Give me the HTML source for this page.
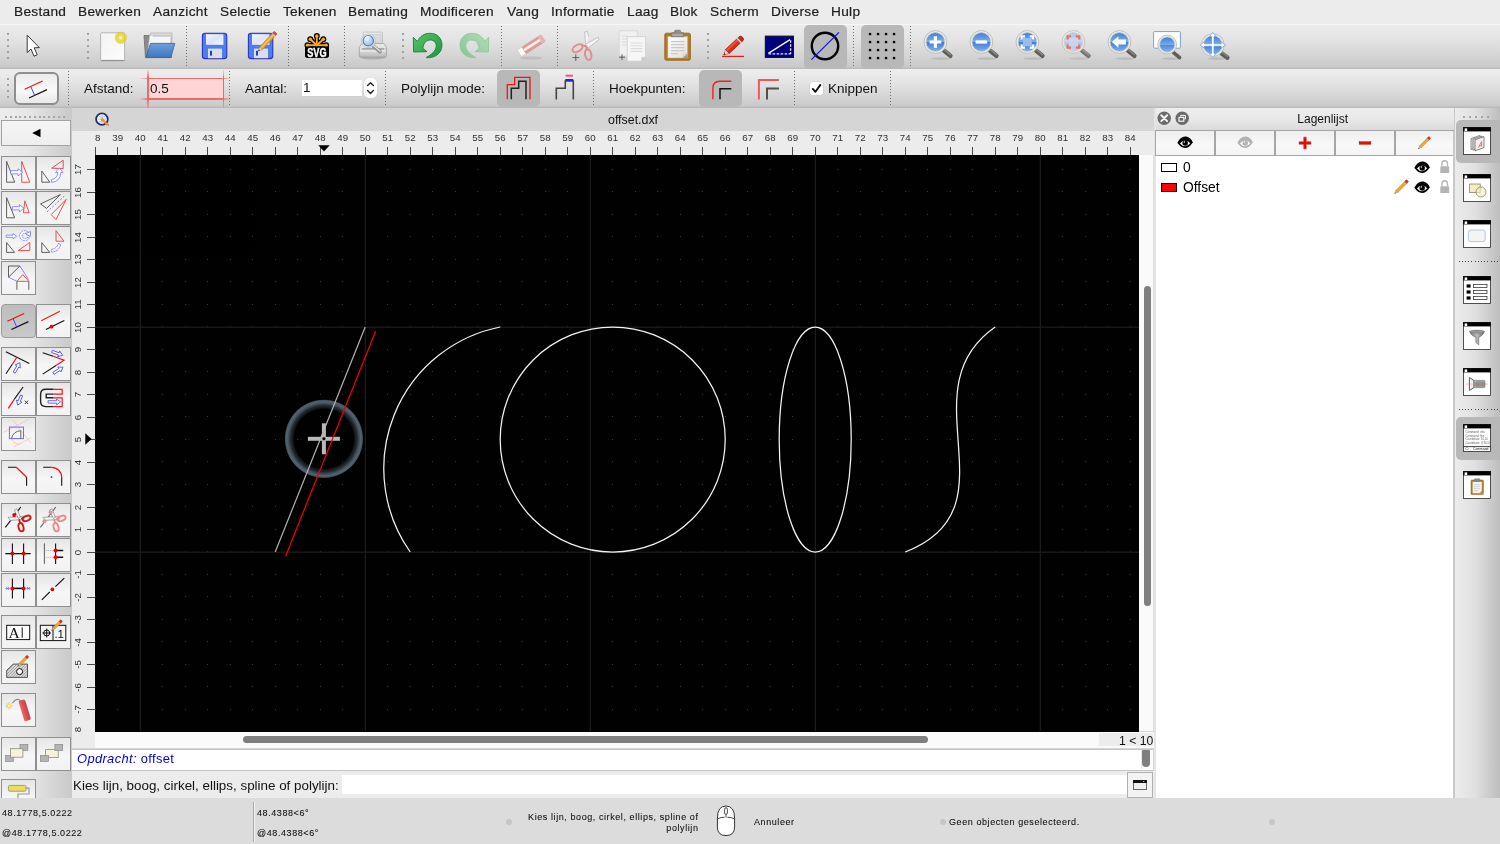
<!DOCTYPE html><html lang="nl"><head><meta charset="utf-8"><title>offset.dxf - QCAD</title><style>
*{box-sizing:border-box;margin:0;padding:0}
html,body{width:1500px;height:844px;overflow:hidden;background:#ececec}
body{font-family:"Liberation Sans",sans-serif;color:#111;position:relative}
#app{position:absolute;left:0;top:0;width:1500px;height:844px;overflow:hidden;background:#d6d6d6;opacity:.999;will-change:transform}
.abs{position:absolute}
.t{position:absolute;white-space:nowrap;line-height:1}
#menubar{left:0;top:0;width:1500px;height:24px;background:#ececec}
#menubar .t{font-size:13.7px;top:4.5px;color:#1c1c1c;letter-spacing:.28px;-webkit-text-stroke:.2px #1c1c1c}
#tb1{left:0;top:24px;width:1500px;height:45px;background:linear-gradient(#ececec 0%,#e3e3e3 35%,#d2d2d2 75%,#c9c9c9 95%,#b6b6b6 100%);border-top:1px solid #f6f6f6}
#tb2{left:0;top:69px;width:1500px;height:39px;background:linear-gradient(#eeeeee 0%,#e4e4e4 35%,#d3d3d3 75%,#cacaca 94%,#b4b4b4 100%)}
#tb2 .t{font-size:13.5px;top:13px;color:#111}
.vsep{position:absolute;width:1px;background:repeating-linear-gradient(#707070 0,#707070 1px,transparent 1px,transparent 3px)}
.hdl{position:absolute;width:2px}
.hl{position:absolute;background:#b8b8b8;border-radius:5px}
#left{left:0;top:108px;width:72px;height:690px;background:linear-gradient(90deg,#ededed 0%,#e6e6e6 40%,#c9c9c9 100%)}
.lb{position:absolute;width:34.5px;height:34px;background:linear-gradient(#e6e6e6,#f6f6f6 55%,#f2f2f2);border:1px solid #8f8f8f}
.lb.on{background:linear-gradient(#bdbdbd,#c9c9c9);border-radius:4px;border-color:#9c9c9c}
.lb svg{position:absolute;left:0;top:0}
#tabbar{left:72px;top:108px;width:1082px;height:23px;background:#d5d5d5}
#rulerT{left:72px;top:131px;width:1082px;height:24px;background:#ececec;overflow:hidden}
#rulerL{left:72px;top:155px;width:23px;height:593px;background:#ececec;overflow:hidden}
#canvas{left:95px;top:155px;width:1044px;height:576.7px;background:#000;overflow:hidden}
#vsb{left:1139px;top:155px;width:15px;height:576px;background:#fafafa;border-right:1px solid #dcdcdc}
#hsb{left:95px;top:731.7px;width:1059px;height:16.3px;background:#fafafa}
.thumb{position:absolute;background:#7f7f7f;border-radius:4px}
#hist{left:72px;top:748.6px;width:1081px;height:22.3px;background:#fff;border-top:1px solid #c4c4c4;border-bottom:1px solid #c4c4c4}
#cmd{left:72px;top:771px;width:1082px;height:27px;background:#ececec}
#status{left:0;top:798.3px;width:1500px;height:46px;background:#dcdcdc}
#status .t{font-size:9px;color:#111;letter-spacing:.58px;-webkit-text-stroke:.08px #111}
.dot{position:absolute;width:6px;height:6px;border-radius:3px;background:#c6c6c6}
#rp{left:1154px;top:108px;width:300px;height:690px;background:#ececec}
#rtb{left:1454px;top:108px;width:46px;height:690px;background:linear-gradient(90deg,#ececec 0%,#e0e0e0 45%,#bdbdbd 100%);border-left:1px solid #c8c8c8}
.lbtn{position:absolute;top:131px;height:24px;background:linear-gradient(#f7f7f7,#ededed);border:1px solid #a8a8a8;border-bottom-color:#989898}
</style></head><body><div id="app">
<div id="menubar" class="abs">
<span class="t" style="left:14px">Bestand</span>
<span class="t" style="left:78px">Bewerken</span>
<span class="t" style="left:153px">Aanzicht</span>
<span class="t" style="left:220px">Selectie</span>
<span class="t" style="left:283px">Tekenen</span>
<span class="t" style="left:348px">Bemating</span>
<span class="t" style="left:420px">Modificeren</span>
<span class="t" style="left:507px">Vang</span>
<span class="t" style="left:551px">Informatie</span>
<span class="t" style="left:627px">Laag</span>
<span class="t" style="left:670px">Blok</span>
<span class="t" style="left:710px">Scherm</span>
<span class="t" style="left:771px">Diverse</span>
<span class="t" style="left:831px">Hulp</span>
</div>
<div id="tb1" class="abs">
<i class="abs" style="left:7px;top:8px;width:2px;height:2px;background:#a2a2a2"></i><i class="abs" style="left:7px;top:14px;width:2px;height:2px;background:#a2a2a2"></i><i class="abs" style="left:7px;top:20px;width:2px;height:2px;background:#a2a2a2"></i><i class="abs" style="left:7px;top:26px;width:2px;height:2px;background:#a2a2a2"></i><i class="abs" style="left:7px;top:32px;width:2px;height:2px;background:#a2a2a2"></i>
<i class="abs" style="left:87px;top:8px;width:2px;height:2px;background:#a2a2a2"></i><i class="abs" style="left:87px;top:14px;width:2px;height:2px;background:#a2a2a2"></i><i class="abs" style="left:87px;top:20px;width:2px;height:2px;background:#a2a2a2"></i><i class="abs" style="left:87px;top:26px;width:2px;height:2px;background:#a2a2a2"></i><i class="abs" style="left:87px;top:32px;width:2px;height:2px;background:#a2a2a2"></i>
<i class="abs" style="left:402px;top:8px;width:2px;height:2px;background:#a2a2a2"></i><i class="abs" style="left:402px;top:14px;width:2px;height:2px;background:#a2a2a2"></i><i class="abs" style="left:402px;top:20px;width:2px;height:2px;background:#a2a2a2"></i><i class="abs" style="left:402px;top:26px;width:2px;height:2px;background:#a2a2a2"></i><i class="abs" style="left:402px;top:32px;width:2px;height:2px;background:#a2a2a2"></i>
<i class="abs" style="left:707px;top:8px;width:2px;height:2px;background:#a2a2a2"></i><i class="abs" style="left:707px;top:14px;width:2px;height:2px;background:#a2a2a2"></i><i class="abs" style="left:707px;top:20px;width:2px;height:2px;background:#a2a2a2"></i><i class="abs" style="left:707px;top:26px;width:2px;height:2px;background:#a2a2a2"></i><i class="abs" style="left:707px;top:32px;width:2px;height:2px;background:#a2a2a2"></i>
<i class="vsep" style="left:186px;top:1px;height:41px"></i>
<i class="vsep" style="left:288px;top:1px;height:41px"></i>
<i class="vsep" style="left:344px;top:1px;height:41px"></i>
<i class="vsep" style="left:501px;top:1px;height:41px"></i>
<i class="vsep" style="left:557px;top:1px;height:41px"></i>
<i class="vsep" style="left:853px;top:1px;height:41px"></i>
<i class="vsep" style="left:910px;top:1px;height:41px"></i>
<div class="hl" style="left:804px;top:0px;width:43px;height:44px"></div>
<div class="hl" style="left:861px;top:0px;width:43px;height:44px"></div>
<svg class="abs" style="left:13px;top:2px" width="36" height="36" viewBox="0 0 36 36"><path d="M14.2 8.2 L14.2 25.6 L18 22 L21 29.2 L24.2 27.8 L21.2 20.8 L26.4 20.6 Z" fill="#fff" stroke="#3a3a3a" stroke-width="1" stroke-linejoin="round"/></svg>
<svg class="abs" style="left:95px;top:2px" width="36" height="36" viewBox="0 0 36 36"><defs><linearGradient id="g1" x1="0" y1="0" x2="1" y2="1"><stop offset="0" stop-color="#f4f4f4"/><stop offset="1" stop-color="#fdfdfd"/></linearGradient><radialGradient id="g2"><stop offset="0" stop-color="#fffff4"/><stop offset=".16" stop-color="#fdf8a8"/><stop offset=".36" stop-color="#eedd34"/><stop offset=".62" stop-color="#e4d02c" stop-opacity=".85"/><stop offset=".88" stop-color="#dcc828" stop-opacity=".55"/><stop offset="1" stop-color="#d8c428" stop-opacity="0"/></radialGradient></defs><rect x="5.6" y="5.8" width="24" height="27.6" rx="1" fill="url(#g1)" stroke="#b5b5b5" stroke-width="1"/><path d="M6 33.6 H29.4" stroke="#8e8e8e" stroke-width="1.1"/><circle cx="25.8" cy="10.8" r="6.6" fill="url(#g2)"/></svg>
<svg class="abs" style="left:141px;top:2px" width="36" height="36" viewBox="0 0 36 36"><defs><linearGradient id="g3" x1="0" y1="0" x2="0" y2="1"><stop offset="0" stop-color="#6fa0dc"/><stop offset="1" stop-color="#3f74be"/></linearGradient></defs><path d="M3 8.5 L13 8.5 L14.5 10.5 L30.5 10.5 L30.5 30.5 L4.5 30.5 Z" fill="#8b8b8b" stroke="#6c6c6c" stroke-width=".8"/><path d="M9.5 6 L31 6 L30.5 22 L8 22 Z" fill="#e4e4e4" stroke="#a8a8a8" stroke-width=".7"/><path d="M8.6 8.2 L30 8.2 L29.5 24 L7 24 Z" fill="#f6f6f6" stroke="#b4b4b4" stroke-width=".7"/><path d="M12 9 H29" stroke="#c4c4c4" stroke-width="1.4"/><path d="M9.6 16.4 L33.8 16.4 L29.8 30.6 L4.8 30.6 Z" fill="url(#g3)" stroke="#3a66a8" stroke-width=".9" stroke-linejoin="round"/></svg>
<svg class="abs" style="left:196px;top:2px" width="36" height="36" viewBox="0 0 36 36"><defs><linearGradient id="g4" x1="0" y1="0" x2="1" y2="1"><stop offset="0" stop-color="#f4f6fc"/><stop offset=".5" stop-color="#dfe4f4"/><stop offset="1" stop-color="#f8f9fd"/></linearGradient></defs><rect x="6.4" y="6.2" width="24.4" height="25.4" rx="2.6" fill="#4d7ef2" stroke="#2b35b4" stroke-width="1.1"/><rect x="10" y="7.2" width="17.4" height="10.6" fill="url(#g4)"/><rect x="12" y="21.6" width="14" height="9.6" fill="#dcdde6"/><rect x="14" y="23.8" width="2" height="4.8" fill="#1c3fd0"/></svg>
<svg class="abs" style="left:243px;top:2px" width="36" height="36" viewBox="0 0 36 36"><defs><linearGradient id="g5" x1="0" y1="0" x2="1" y2="1"><stop offset="0" stop-color="#f4f6fc"/><stop offset=".5" stop-color="#dfe4f4"/><stop offset="1" stop-color="#f8f9fd"/></linearGradient></defs><rect x="5.4" y="6.2" width="24.4" height="25.4" rx="2.6" fill="#4d7ef2" stroke="#2b35b4" stroke-width="1.1"/><rect x="9" y="7.2" width="17.4" height="10.6" fill="url(#g5)"/><rect x="11" y="21.6" width="14" height="9.6" fill="#dcdde6"/><rect x="13" y="23.8" width="2" height="4.8" fill="#1c3fd0"/><g transform="translate(32.6 5.6) rotate(43)"><rect x="-2" y="0" width="4" height="2.6" fill="#e0443a" stroke="#b03028" stroke-width=".4"/><rect x="-2" y="2.6" width="4" height="1.4" fill="#d8d0c0"/><rect x="-2" y="4" width="4" height="17" fill="#f0a028" stroke="#b87414" stroke-width=".5"/><rect x="-.6" y="4" width="1.2" height="17" fill="#f8c860"/><path d="M-2 21 L0 25.4 L2 21 Z" fill="#ecd0a8" stroke="#9a6a34" stroke-width=".4"/><path d="M-.7 23.8 L0 25.4 L.7 23.8 Z" fill="#222"/></g></svg>
<svg class="abs" style="left:299px;top:2px" width="36" height="36" viewBox="0 0 36 36"><rect x="6" y="16.4" width="23.9" height="14.4" rx="2.8" fill="#000"/><g stroke="#000" stroke-linecap="round"><line x1="17.8" y1="18.3" x2="8.5" y2="18.3" stroke-width="4.4"/><circle cx="8.5" cy="18.3" r="3" fill="#000" stroke="none"/><line x1="17.8" y1="18.3" x2="11.3" y2="12.2" stroke-width="4.4"/><circle cx="11.3" cy="12.2" r="3" fill="#000" stroke="none"/><line x1="17.8" y1="18.3" x2="17.8" y2="9.0" stroke-width="4.4"/><circle cx="17.8" cy="9.0" r="3" fill="#000" stroke="none"/><line x1="17.8" y1="18.3" x2="24.3" y2="12.2" stroke-width="4.4"/><circle cx="24.3" cy="12.2" r="3" fill="#000" stroke="none"/><line x1="17.8" y1="18.3" x2="27.1" y2="18.3" stroke-width="4.4"/><circle cx="27.1" cy="18.3" r="3" fill="#000" stroke="none"/></g><g stroke="#f9a825" stroke-linecap="round"><line x1="17.8" y1="18.3" x2="8.5" y2="18.3" stroke-width="1.9"/><circle cx="8.5" cy="18.3" r="1.75" fill="#f9a825" stroke="none"/><line x1="17.8" y1="18.3" x2="11.3" y2="12.2" stroke-width="1.9"/><circle cx="11.3" cy="12.2" r="1.75" fill="#f9a825" stroke="none"/><line x1="17.8" y1="18.3" x2="17.8" y2="9.0" stroke-width="1.9"/><circle cx="17.8" cy="9.0" r="1.75" fill="#f9a825" stroke="none"/><line x1="17.8" y1="18.3" x2="24.3" y2="12.2" stroke-width="1.9"/><circle cx="24.3" cy="12.2" r="1.75" fill="#f9a825" stroke="none"/><line x1="17.8" y1="18.3" x2="27.1" y2="18.3" stroke-width="1.9"/><circle cx="27.1" cy="18.3" r="1.75" fill="#f9a825" stroke="none"/></g><rect x="6" y="19.6" width="23.9" height="11.2" rx="2.4" fill="#000"/><text x="17.9" y="29.6" text-anchor="middle" font-family="Liberation Sans,sans-serif" font-weight="bold" font-size="12.7" textLength="19.4" lengthAdjust="spacingAndGlyphs" fill="#fff" stroke="#fff" stroke-width=".35">SVG</text></svg>
<svg class="abs" style="left:355px;top:2px" width="36" height="36" viewBox="0 0 36 36"><defs><linearGradient id="g6" x1="0" y1="0" x2="0" y2="1"><stop offset="0" stop-color="#ededed"/><stop offset=".45" stop-color="#dcdcdc"/><stop offset="1" stop-color="#b9b9b9"/></linearGradient><radialGradient id="g7" cx=".4" cy=".35"><stop offset="0" stop-color="#eaf2fb"/><stop offset="1" stop-color="#a9c6e8"/></radialGradient><linearGradient id="g8" x1="0" y1="0" x2="1" y2="1"><stop offset="0" stop-color="#f4f4f4"/><stop offset="1" stop-color="#d6d6d6"/></linearGradient></defs><ellipse cx="18" cy="30.6" rx="12.6" ry="2" fill="#000" opacity=".16"/><rect x="8.3" y="5.1" width="19.1" height="13.6" rx=".8" fill="url(#g8)" stroke="#b4b4b4" stroke-width=".7"/><rect x="17.6" y="7.4" width="7.8" height="8" fill="#dadada" stroke="#c4c4c4" stroke-width=".5"/><path d="M6.6 16.6 H29.2 L31.4 20.4 V28.6 Q31.4 30.2 29.8 30.2 H5.9 Q4.3 30.2 4.3 28.6 V20.4 Z" fill="url(#g6)" stroke="#9c9c9c" stroke-width=".8"/><path d="M7 21.9 H29.4" stroke="#8a8a8a" stroke-width="1.1"/><path d="M5 24 H30.8" stroke="#f4f4f4" stroke-width=".9"/><path d="M18.2 18.8 L25 24.6" stroke="#8c8c8c" stroke-width="3.6" stroke-linecap="round"/><path d="M18.4 18.4 L25.2 24.2" stroke="#e0e0e0" stroke-width="1.5" stroke-linecap="round"/><circle cx="13.3" cy="13.7" r="6.9" fill="#e8e8e4" stroke="#b6b6b0" stroke-width=".6"/><circle cx="13.3" cy="13.7" r="5.2" fill="url(#g7)" stroke="#4a84d0" stroke-width="1.1"/><path d="M10 12.4 A3.8 3.8 0 0 1 14.6 9.8" stroke="#fff" stroke-width="1.1" fill="none" opacity=".8"/></svg>
<svg class="abs" style="left:410px;top:2px" width="36" height="36" viewBox="0 0 36 36"><defs><linearGradient id="g9" x1="0" y1="0" x2="1" y2="1"><stop offset="0" stop-color="#5cc46a"/><stop offset="1" stop-color="#1f9440"/></linearGradient></defs><path d="M3.3 10.3 L3.6 25 L16.9 24.7 L12.9 21.3 C13.5 15.8 16.6 13 20.2 13 C24.2 13 26.6 16 26.2 19.6 C25.8 24 21.8 27.6 16 30.6 C23.4 31.6 32 27.2 32 18.3 C32 11 27 6.3 20 6.3 C14 6.3 9.6 9.6 7.4 14.4 Z" fill="url(#g9)" stroke="#178234" stroke-width=".9" stroke-linejoin="round"/></svg>
<svg class="abs" style="left:456px;top:2px" width="36" height="36" viewBox="0 0 36 36"><g transform="translate(36 0) scale(-1 1)"><defs><linearGradient id="g10" x1="0" y1="0" x2="1" y2="1"><stop offset="0" stop-color="#b4dcb8"/><stop offset="1" stop-color="#86c494"/></linearGradient></defs><path d="M3.3 10.3 L3.6 25 L16.9 24.7 L12.9 21.3 C13.5 15.8 16.6 13 20.2 13 C24.2 13 26.6 16 26.2 19.6 C25.8 24 21.8 27.6 16 30.6 C23.4 31.6 32 27.2 32 18.3 C32 11 27 6.3 20 6.3 C14 6.3 9.6 9.6 7.4 14.4 Z" fill="url(#g10)" stroke="#8cc89a" stroke-width=".9" stroke-linejoin="round"/></g></svg>
<svg class="abs" style="left:512px;top:2px" width="36" height="36" viewBox="0 0 36 36"><ellipse cx="19" cy="31" rx="11" ry="1.6" fill="#000" opacity=".09"/><g transform="translate(9.4 29.6) rotate(-32.5)"><rect x="0" y="-7.8" width="5.6" height="7.8" rx=".6" fill="#fbfbfb" stroke="#c4c4c4" stroke-width=".5"/><rect x="5.6" y="-7.8" width="22.6" height="7.8" rx="1" fill="#e29a98" stroke="#cf8a88" stroke-width=".5"/><rect x="5.6" y="-5.4" width="19.6" height="2.6" fill="#f8f0f0"/><path d="M25.2 -7.8 V0" stroke="#d8c0c0" stroke-width="1.6"/><rect x="26" y="-7.8" width="2.2" height="7.8" rx="1" fill="#e8b4b2"/></g></svg>
<svg class="abs" style="left:567px;top:2px" width="36" height="36" viewBox="0 0 36 36"><g fill="none" stroke-linecap="round"><path d="M21.6 9.4 L20.2 4.2 L17.6 5 L19 21.6" fill="#f4f4f4" stroke="#b9b9b9" stroke-width=".8" stroke-linejoin="round"/><path d="M21 21 L32 12.6 L31 10.2 L19.4 16.8" fill="#f4f4f4" stroke="#b9b9b9" stroke-width=".8" stroke-linejoin="round"/><ellipse cx="10.6" cy="21.2" rx="5.6" ry="3.2" transform="rotate(-33 10.6 21.2)" stroke="#de8e92" stroke-width="2"/><ellipse cx="21.2" cy="27.6" rx="3.1" ry="5.4" transform="rotate(-12 21.2 27.6)" stroke="#de8e92" stroke-width="2"/><path d="M15.4 18.6 L19.4 19.4 L20.4 22.6" stroke="#de8e92" stroke-width="2"/><path d="M5.8 30.6 H11.8 M8.8 27.6 V33.6" stroke="#444" stroke-width=".8"/></g></svg>
<svg class="abs" style="left:613px;top:2px" width="36" height="36" viewBox="0 0 36 36"><g><path d="M6.2 3.8 H24.4 V29 H6.2 Z" fill="#f1f1f1" stroke="#d4d4d4" stroke-width=".8"/><path d="M9 9 H15 M9 12 H15 M9 15 H15 M9 18 H15" stroke="#d8d8d8" stroke-width="1"/><path d="M14.2 9.6 H32.6 V30.4 L28.8 34.2 H14.2 Z" fill="#f6f6f6" stroke="#cdcdcd" stroke-width=".8"/><path d="M32.6 30.4 L28.8 30.4 L28.8 34.2 Z" fill="#d0d0d0" stroke="#c0c0c0" stroke-width=".5"/><path d="M17.6 16 H29.4 M17.6 18.8 H29.4 M17.6 21.6 H29.4 M17.6 24.4 H29.4" stroke="#dadada" stroke-width="1.1"/><path d="M6 30.2 H12 M9 27.2 V33.2" stroke="#444" stroke-width=".8"/></g></svg>
<svg class="abs" style="left:659px;top:2px" width="36" height="36" viewBox="0 0 36 36"><defs><linearGradient id="g11" x1="0" y1="0" x2="1" y2="1"><stop offset="0" stop-color="#ffffff"/><stop offset="1" stop-color="#dedede"/></linearGradient></defs><rect x="5.8" y="6.2" width="25.6" height="27" rx="1.6" fill="#b97a22" stroke="#8a5a14" stroke-width=".8"/><path d="M8.8 9.4 H28.6 V31 H8.8 Z" fill="url(#g11)" stroke="#a8a8a8" stroke-width=".5"/><path d="M28.6 26.2 L23.6 31 L28.6 31 Z" fill="#9a9a9a"/><path d="M23.6 31 L24.2 26.8 L28.6 26.2 Z" fill="#d4d4d4"/><path d="M12 14.6 H25.4 M12 17.6 H25.4 M12 20.6 H25.4 M12 23.6 H25.4 M12 26.6 H19" stroke="#c9c9c9" stroke-width="1.1"/><path d="M12.4 9.8 V6.6 Q12.4 5.6 13.4 5.6 H15.6 V4.2 Q15.6 3.2 16.6 3.2 H20.6 Q21.6 3.2 21.6 4.2 V5.6 H23.8 Q24.8 5.6 24.8 6.6 V9.8 Z" fill="#8f8f84" stroke="#6e6e64" stroke-width=".6"/><rect x="13.4" y="7.2" width="10.4" height="1.6" fill="#b4b4a8"/></svg>
<svg class="abs" style="left:715px;top:2px" width="36" height="36" viewBox="0 0 36 36"><path d="M7 29.4 H29" stroke="#f01818" stroke-width="1.2"/><g transform="translate(8.6 28) rotate(47)"><path d="M0 0 L-2.7 -5.2 L2.7 -5.2 Z" fill="#f0d4ac" stroke="#8a5a34" stroke-width=".5"/><path d="M0 0 L-.9 -1.8 L.9 -1.8 Z" fill="#1a1a1a"/><rect x="-2.7" y="-20.4" width="5.4" height="15.2" fill="#dc2a18" stroke="#8e1408" stroke-width=".6"/><rect x="-2" y="-20.4" width="1.6" height="15.2" fill="#f0583c"/><rect x="-2.7" y="-22.4" width="5.4" height="2" fill="#d4d4d4" stroke="#909090" stroke-width=".4"/><path d="M-2.7 -22.4 V-24.2 Q-2.7 -26 0 -26 Q2.7 -26 2.7 -24.2 V-22.4 Z" fill="#d82414" stroke="#8e1408" stroke-width=".6"/></g></svg>
<svg class="abs" style="left:761px;top:2px" width="36" height="36" viewBox="0 0 36 36"><rect x="4.4" y="9.2" width="28" height="21.2" fill="#00007e" stroke="#10103c" stroke-width="1.2"/><path d="M7.4 26.4 L29 12.6" stroke="#fff" stroke-width="1.3"/><path d="M7.6 26.9 H29.6" stroke="#e8e8f4" stroke-width="1.3" stroke-dasharray="2.6 1.4"/><path d="M29.6 13.2 V26.9" stroke="#e8e8f4" stroke-width="1.3" stroke-dasharray="2.6 1.4"/></svg>
<svg class="abs" style="left:807px;top:2px" width="36" height="36" viewBox="0 0 36 36"><circle cx="18" cy="19" r="13.2" fill="none" stroke="#000" stroke-width="2.4"/><path d="M4.4 32.6 L32 5.4" stroke="#1414f0" stroke-width="1.3"/></svg>
<svg class="abs" style="left:864px;top:2px" width="36" height="36" viewBox="0 0 36 36"><rect x="4.9" y="5.9" width="2.3" height="2.3" fill="#000"/><rect x="4.9" y="13.9" width="2.3" height="2.3" fill="#000"/><rect x="4.9" y="21.9" width="2.3" height="2.3" fill="#000"/><rect x="4.9" y="29.9" width="2.3" height="2.3" fill="#000"/><rect x="12.9" y="5.9" width="2.3" height="2.3" fill="#000"/><rect x="12.9" y="13.9" width="2.3" height="2.3" fill="#000"/><rect x="12.9" y="21.9" width="2.3" height="2.3" fill="#000"/><rect x="12.9" y="29.9" width="2.3" height="2.3" fill="#000"/><rect x="20.9" y="5.9" width="2.3" height="2.3" fill="#000"/><rect x="20.9" y="13.9" width="2.3" height="2.3" fill="#000"/><rect x="20.9" y="21.9" width="2.3" height="2.3" fill="#000"/><rect x="20.9" y="29.9" width="2.3" height="2.3" fill="#000"/><rect x="28.9" y="5.9" width="2.3" height="2.3" fill="#000"/><rect x="28.9" y="13.9" width="2.3" height="2.3" fill="#000"/><rect x="28.9" y="21.9" width="2.3" height="2.3" fill="#000"/><rect x="28.9" y="29.9" width="2.3" height="2.3" fill="#000"/></svg>
<svg class="abs" style="left:919px;top:2px" width="36" height="36" viewBox="0 0 36 36"><g opacity="1"><defs><linearGradient id="g12" x1="0" y1="0" x2="0" y2="1"><stop offset="0" stop-color="#3f7fd4"/><stop offset=".5" stop-color="#7fb0ea"/><stop offset=".52" stop-color="#3f7fd4"/><stop offset="1" stop-color="#7fb0ea"/></linearGradient></defs><ellipse cx="22" cy="31.6" rx="10" ry="1.3" fill="#000" opacity=".10"/><path d="M25.2 23.8 L31.4 28.8" stroke="#5e5e5a" stroke-width="4.4" stroke-linecap="round"/><path d="M25.8 23 L31.8 27.8" stroke="#8e8e88" stroke-width="1.2" stroke-linecap="round"/><circle cx="16.4" cy="15" r="11.4" fill="#eeeee6" stroke="#b4b4a8" stroke-width=".8"/><circle cx="16.4" cy="15" r="9.4" fill="url(#g12)" stroke="#c6ccd6" stroke-width=".8"/><path d="M10.6 15 H22.2 M16.4 9.2 V20.8" stroke="#fff" stroke-width="3.2"/></g></svg>
<svg class="abs" style="left:965px;top:2px" width="36" height="36" viewBox="0 0 36 36"><g opacity="1"><defs><linearGradient id="g13" x1="0" y1="0" x2="0" y2="1"><stop offset="0" stop-color="#3f7fd4"/><stop offset=".5" stop-color="#7fb0ea"/><stop offset=".52" stop-color="#3f7fd4"/><stop offset="1" stop-color="#7fb0ea"/></linearGradient></defs><ellipse cx="22" cy="31.6" rx="10" ry="1.3" fill="#000" opacity=".10"/><path d="M25.2 23.8 L31.4 28.8" stroke="#5e5e5a" stroke-width="4.4" stroke-linecap="round"/><path d="M25.8 23 L31.8 27.8" stroke="#8e8e88" stroke-width="1.2" stroke-linecap="round"/><circle cx="16.4" cy="15" r="11.4" fill="#eeeee6" stroke="#b4b4a8" stroke-width=".8"/><circle cx="16.4" cy="15" r="9.4" fill="url(#g13)" stroke="#c6ccd6" stroke-width=".8"/><path d="M10.6 15 H22.2" stroke="#fff" stroke-width="3.2"/></g></svg>
<svg class="abs" style="left:1011px;top:2px" width="36" height="36" viewBox="0 0 36 36"><g opacity="1"><defs><linearGradient id="g14" x1="0" y1="0" x2="0" y2="1"><stop offset="0" stop-color="#3f7fd4"/><stop offset=".5" stop-color="#7fb0ea"/><stop offset=".52" stop-color="#3f7fd4"/><stop offset="1" stop-color="#7fb0ea"/></linearGradient></defs><ellipse cx="22" cy="31.6" rx="10" ry="1.3" fill="#000" opacity=".10"/><path d="M25.2 23.8 L31.4 28.8" stroke="#5e5e5a" stroke-width="4.4" stroke-linecap="round"/><path d="M25.8 23 L31.8 27.8" stroke="#8e8e88" stroke-width="1.2" stroke-linecap="round"/><circle cx="16.4" cy="15" r="11.4" fill="#eeeee6" stroke="#b4b4a8" stroke-width=".8"/><circle cx="16.4" cy="15" r="9.4" fill="url(#g14)" stroke="#c6ccd6" stroke-width=".8"/><rect x="12" y="11" width="8.8" height="8" fill="#9cbcec"/><path d="M10.6 12.6 V9.4 H14 M18.8 9.4 H22.2 V12.6 M22.2 17.4 V20.6 H18.8 M14 20.6 H10.6 V17.4" fill="none" stroke="#fff" stroke-width="2.2"/></g></svg>
<svg class="abs" style="left:1057px;top:2px" width="36" height="36" viewBox="0 0 36 36"><g opacity="0.8"><defs><linearGradient id="g15" x1="0" y1="0" x2="0" y2="1"><stop offset="0" stop-color="#a4c0e8"/><stop offset=".5" stop-color="#c4d6f0"/><stop offset=".52" stop-color="#a4c0e8"/><stop offset="1" stop-color="#c4d6f0"/></linearGradient></defs><ellipse cx="22" cy="31.6" rx="10" ry="1.3" fill="#000" opacity=".10"/><path d="M25.2 23.8 L31.4 28.8" stroke="#5e5e5a" stroke-width="4.4" stroke-linecap="round"/><path d="M25.8 23 L31.8 27.8" stroke="#8e8e88" stroke-width="1.2" stroke-linecap="round"/><circle cx="16.4" cy="15" r="11.4" fill="#eeeee6" stroke="#b4b4a8" stroke-width=".8"/><circle cx="16.4" cy="15" r="9.4" fill="url(#g15)" stroke="#c6ccd6" stroke-width=".8"/><rect x="12" y="11" width="8.8" height="8" fill="#c4d4ec"/><path d="M10.6 12.6 V9.4 H14 M18.8 9.4 H22.2 V12.6 M22.2 17.4 V20.6 H18.8 M14 20.6 H10.6 V17.4" fill="none" stroke="#f05050" stroke-width="2.2"/></g></svg>
<svg class="abs" style="left:1103px;top:2px" width="36" height="36" viewBox="0 0 36 36"><g opacity="1"><defs><linearGradient id="g16" x1="0" y1="0" x2="0" y2="1"><stop offset="0" stop-color="#3f7fd4"/><stop offset=".5" stop-color="#7fb0ea"/><stop offset=".52" stop-color="#3f7fd4"/><stop offset="1" stop-color="#7fb0ea"/></linearGradient></defs><ellipse cx="22" cy="31.6" rx="10" ry="1.3" fill="#000" opacity=".10"/><path d="M25.2 23.8 L31.4 28.8" stroke="#5e5e5a" stroke-width="4.4" stroke-linecap="round"/><path d="M25.8 23 L31.8 27.8" stroke="#8e8e88" stroke-width="1.2" stroke-linecap="round"/><circle cx="16.4" cy="15" r="11.4" fill="#eeeee6" stroke="#b4b4a8" stroke-width=".8"/><circle cx="16.4" cy="15" r="9.4" fill="url(#g16)" stroke="#c6ccd6" stroke-width=".8"/><path d="M8.8 15 L15.4 9.2 V12.6 H23 V17.4 H15.4 V20.8 Z" fill="#fff"/></g></svg>
<svg class="abs" style="left:1149px;top:2px" width="36" height="36" viewBox="0 0 36 36"><defs><linearGradient id="g17" x1="0" y1="0" x2="0" y2="1"><stop offset="0" stop-color="#3f7fd4"/><stop offset=".5" stop-color="#78aae8"/><stop offset=".52" stop-color="#4c88d8"/><stop offset="1" stop-color="#8ab6ee"/></linearGradient></defs><rect x="4.6" y="4.6" width="26.8" height="16.6" rx="1" fill="#fff" stroke="#7a9edc" stroke-width="1"/><ellipse cx="22" cy="31.6" rx="9" ry="1.3" fill="#000" opacity=".10"/><path d="M24.6 25.6 L30.6 30.6" stroke="#5e5e5a" stroke-width="3.6" stroke-linecap="round"/><circle cx="18.2" cy="17.6" r="9.4" fill="#eeeee6" stroke="#b4b4a8" stroke-width=".8"/><circle cx="18.2" cy="17.6" r="7.6" fill="url(#g17)" stroke="#c6ccd6" stroke-width=".7"/></svg>
<svg class="abs" style="left:1195px;top:2px" width="36" height="36" viewBox="0 0 36 36"><g opacity="1"><defs><linearGradient id="g18" x1="0" y1="0" x2="0" y2="1"><stop offset="0" stop-color="#3f7fd4"/><stop offset=".5" stop-color="#7fb0ea"/><stop offset=".52" stop-color="#3f7fd4"/><stop offset="1" stop-color="#7fb0ea"/></linearGradient></defs><ellipse cx="22" cy="31.6" rx="10" ry="1.3" fill="#000" opacity=".10"/><path d="M26.6 26.4 L32.4 30.6" stroke="#5e5e5a" stroke-width="4.4" stroke-linecap="round"/><path d="M27.2 25.6 L32.8 29.6" stroke="#8e8e88" stroke-width="1.2" stroke-linecap="round"/><circle cx="17.8" cy="18" r="11.4" fill="#eeeee6" stroke="#b4b4a8" stroke-width=".8"/><circle cx="17.8" cy="18" r="9.4" fill="url(#g18)" stroke="#c6ccd6" stroke-width=".8"/><g transform="translate(1.4 3)"><path d="M16.4 2.4 L19.6 6.6 H17.6 V13.8 H24.8 V11.8 L29 15 L24.8 18.2 V16.2 H17.6 V23.4 H19.6 L16.4 27.6 L13.2 23.4 H15.2 V16.2 H8 V18.2 L3.8 15 L8 11.8 V13.8 H15.2 V6.6 H13.2 Z" fill="#fff" stroke="#5a8cd8" stroke-width=".6"/></g></g></svg>
</div>
<div id="tb2" class="abs">
<i class="abs" style="left:7px;top:9px;width:2px;height:2px;background:#a2a2a2"></i><i class="abs" style="left:7px;top:15px;width:2px;height:2px;background:#a2a2a2"></i><i class="abs" style="left:7px;top:21px;width:2px;height:2px;background:#a2a2a2"></i><i class="abs" style="left:7px;top:27px;width:2px;height:2px;background:#a2a2a2"></i>
<div class="abs" style="left:14px;top:3px;width:45px;height:33px;border:2px solid #8e8e8e;border-radius:6px;background:linear-gradient(#ececec,#fafafa 55%,#e9e9e9)"></div>
<svg class="abs" style="left:19px;top:3px" width="34" height="34" viewBox="0 0 34 34"><path d="M5.6 17.2 L23.6 9.0" stroke="#f01010" stroke-width="1.2"/><path d="M10.0 26.0 L28.0 17.6" stroke="#111" stroke-width="1.2"/><path d="M11.8 14.6 L15.6 23.4" stroke="#4444f4" stroke-width="1"/></svg>
<i class="vsep" style="left:68px;top:2px;height:34px"></i>
<i class="vsep" style="left:229px;top:2px;height:34px"></i>
<i class="vsep" style="left:385px;top:2px;height:34px"></i>
<i class="vsep" style="left:593px;top:2px;height:34px"></i>
<i class="vsep" style="left:794px;top:2px;height:34px"></i>
<i class="vsep" style="left:890px;top:2px;height:34px"></i>
<span class="t" style="left:84px">Afstand:</span>
<div class="abs" style="left:147px;top:9px;width:77px;height:21px;background:#ffd4d4"></div>
<div class="abs" style="left:139px;top:8.5px;width:93px;height:1.5px;background:linear-gradient(90deg,rgba(240,90,90,0),#ee6a6a 12%,#ee6a6a 88%,rgba(240,90,90,0))"></div>
<div class="abs" style="left:139px;top:29px;width:93px;height:1.5px;background:linear-gradient(90deg,rgba(240,90,90,0),#ee6a6a 12%,#ee6a6a 88%,rgba(240,90,90,0))"></div>
<div class="abs" style="left:147px;top:0px;width:1.5px;height:39px;background:linear-gradient(rgba(240,90,90,0),#ee6a6a 22%,#ee6a6a 78%,rgba(240,90,90,.3))"></div>
<div class="abs" style="left:222.5px;top:0px;width:1.5px;height:39px;background:linear-gradient(rgba(240,90,90,0),#ee6a6a 22%,#ee6a6a 78%,rgba(240,90,90,.3))"></div>
<span class="t" style="left:150px;font-size:13.5px">0.5</span>
<span class="t" style="left:245px">Aantal:</span>
<div class="abs" style="left:302px;top:11px;width:60px;height:17px;background:#fff;border-bottom:1px solid #d0d0d0"></div>
<span class="t" style="left:303px;top:12px;font-size:13.5px">1</span>
<div class="abs" style="left:364px;top:9px;width:13px;height:20px;background:#fff;border-radius:5px;box-shadow:0 0 1px #bbb"></div>
<svg class="abs" style="left:364px;top:8px" width="13" height="22"><path d="M3.6 8.6 L6.5 5.8 L9.4 8.6 M3.6 13.6 L6.5 16.4 L9.4 13.6" fill="none" stroke="#222" stroke-width="1.4" stroke-linecap="round" stroke-linejoin="round"/></svg>
<span class="t" style="left:401px">Polylijn mode:</span>
<div class="hl" style="left:497px;top:1px;width:43px;height:37px"></div>
<svg class="abs" style="left:502px;top:3px" width="34" height="34" viewBox="0 0 34 34"><path d="M5.3 27.3 V12.7 H12.7 V5.3 H28 V27.3" fill="none" stroke="#f01414" stroke-width="1.3"/><path d="M9.3 27.3 V16.3 H16.7 V9.3 H24 V27.3" fill="none" stroke="#222" stroke-width="1.5"/></svg>
<svg class="abs" style="left:548px;top:3px" width="34" height="34" viewBox="0 0 34 34"><path d="M8.3 27.6 V16.3 H17.3 V9 H25.3 V27.6" fill="none" stroke="#444" stroke-width="1.6"/><path d="M17.3 8 H25.3" stroke="#2222ee" stroke-width="2"/><path d="M17.6 3.7 H25" stroke="#f25c5c" stroke-width="2"/></svg>
<span class="t" style="left:609px">Hoekpunten:</span>
<div class="hl" style="left:699px;top:1px;width:43px;height:37px"></div>
<svg class="abs" style="left:704px;top:3px" width="34" height="34" viewBox="0 0 34 34"><path d="M8.9 27.3 V16.3 Q8.9 9.3 15.9 9.3 H27.3" fill="none" stroke="#f02020" stroke-width="1.4"/><path d="M16 27.3 V16.7 H27.3" fill="none" stroke="#111" stroke-width="1.5"/></svg>
<svg class="abs" style="left:750px;top:3px" width="34" height="34" viewBox="0 0 34 34"><path d="M8.9 27.6 V8.1 H28.9" fill="none" stroke="#f05858" stroke-width="2"/><path d="M17 27.6 V16.4 H28.9" fill="none" stroke="#505050" stroke-width="2"/></svg>
<div class="abs" style="left:810px;top:13px;width:13px;height:13px;background:#fff;border-radius:3px;box-shadow:0 0 0 .5px #c9c9c9"></div>
<svg class="abs" style="left:810px;top:13px" width="13" height="13"><path d="M2.8 6.9 L5.4 9.8 L10.4 2.9" fill="none" stroke="#111" stroke-width="1.9" stroke-linecap="round" stroke-linejoin="round"/></svg>
<span class="t" style="left:828px">Knippen</span>
</div>
<div id="left" class="abs">
<i class="abs" style="left:5.0px;top:8px;width:2px;height:2px;background:#a5a5a5"></i>
<i class="abs" style="left:9.8px;top:8px;width:2px;height:2px;background:#a5a5a5"></i>
<i class="abs" style="left:14.6px;top:8px;width:2px;height:2px;background:#a5a5a5"></i>
<i class="abs" style="left:19.4px;top:8px;width:2px;height:2px;background:#a5a5a5"></i>
<i class="abs" style="left:24.2px;top:8px;width:2px;height:2px;background:#a5a5a5"></i>
<i class="abs" style="left:29.0px;top:8px;width:2px;height:2px;background:#a5a5a5"></i>
<i class="abs" style="left:33.8px;top:8px;width:2px;height:2px;background:#a5a5a5"></i>
<i class="abs" style="left:38.6px;top:8px;width:2px;height:2px;background:#a5a5a5"></i>
<i class="abs" style="left:43.4px;top:8px;width:2px;height:2px;background:#a5a5a5"></i>
<i class="abs" style="left:48.2px;top:8px;width:2px;height:2px;background:#a5a5a5"></i>
<i class="abs" style="left:53.0px;top:8px;width:2px;height:2px;background:#a5a5a5"></i>
<i class="abs" style="left:57.8px;top:8px;width:2px;height:2px;background:#a5a5a5"></i>
<i class="abs" style="left:62.6px;top:8px;width:2px;height:2px;background:#a5a5a5"></i>
<div class="abs" style="left:1px;top:12px;width:70px;height:26px;background:linear-gradient(#f6f6f6,#efefef);border:1px solid #a2a2a2"></div>
<svg class="abs" style="left:30px;top:20px" width="12" height="10"><path d="M10.5 .8 L2.2 5 L10.5 9.2 Z" fill="#000"/></svg>
<div class="lb" style="left:1.3px;top:48.400000000000006px"><svg width="32" height="32" viewBox="0 0 32 32"><path d="M4.6 4.4 V25.2 H12.7 Z" fill="none" stroke="#5e5e5e" stroke-width="1"/><path d="M19.7 4.4 V25.2 H27.8 Z" fill="none" stroke="#f04c4c" stroke-width="1"/><path d="M8.6 13.700000000000001 H16.0 V11.700000000000001 L20.6 15.3 L16.0 18.900000000000002 V16.900000000000002 H8.6 Z" fill="#fff" stroke="#6c6cf8" stroke-width=".75" stroke-linejoin="round"/></svg></div>
<div class="lb" style="left:36.3px;top:48.400000000000006px"><svg width="32" height="32" viewBox="0 0 32 32"><path d="M4.8 14 V25.2 H12.8 Z" fill="none" stroke="#5e5e5e" stroke-width="1"/><path d="M26.2 3.2 V11.6 L14.6 11.2 Z" fill="none" stroke="#f04c4c" stroke-width="1"/><path d="M14.4 22.6 Q20.4 21.6 20.8 15.6 H18.6 L22.4 10.8 L26 15.6 H23.8 Q23.4 24.4 14.8 25.4 Z" fill="#fff" stroke="#6c6cf8" stroke-width=".75" stroke-linejoin="round"/></svg></div>
<div class="lb" style="left:1.3px;top:83.4px"><svg width="32" height="32" viewBox="0 0 32 32"><path d="M4.6 5.6 V25.8 H12.7 Z" fill="none" stroke="#5e5e5e" stroke-width="1"/><path d="M22.9 8.8 L21.4 20.8 H27.2 Z" fill="none" stroke="#f04c4c" stroke-width="1"/><path d="M10.4 14.700000000000001 H17.4 V12.700000000000001 L22 16.3 L17.4 19.900000000000002 V17.900000000000002 H10.4 Z" fill="#fff" stroke="#6c6cf8" stroke-width=".75" stroke-linejoin="round"/></svg></div>
<div class="lb" style="left:36.3px;top:83.4px"><svg width="32" height="32" viewBox="0 0 32 32"><path d="M3.5 11.9 L23.4 2.6 L9.6 16.4 Z" fill="none" stroke="#5e5e5e" stroke-width="1"/><path d="M14.2 22.6 L29.2 7.4 L19 27.6 Z" fill="none" stroke="#f04c4c" stroke-width="1"/><path d="M10 20 L27.2 4.2" stroke="#6c6cf8" stroke-width=".9" stroke-dasharray="2 1.6"/></svg></div>
<div class="lb" style="left:1.3px;top:118.4px"><svg width="32" height="32" viewBox="0 0 32 32"><path d="M4.6 15.6 V25.4 H12.6 Z" fill="none" stroke="#5e5e5e" stroke-width="1"/><path d="M16.2 23.6 L27.8 15.4 V23.6 Z" fill="none" stroke="#f04c4c" stroke-width="1"/><path d="M4.2 8.1 H11.0 V6.6 L14.6 9.2 L11.0 11.799999999999999 V10.299999999999999 H4.2 Z" fill="#fff" stroke="#6c6cf8" stroke-width=".75" stroke-linejoin="round"/><path d="M27.2 10.8 A5 5 0 1 1 27.4 7.2 L25.2 8 A2.6 2.6 0 1 0 25 10.2 Z" fill="#fff" stroke="#6c6cf8" stroke-width=".8" stroke-dasharray="1.8 .7"/><path d="M23.4 6.4 L28.6 4.6 L28.2 9.6 Z" fill="#fff" stroke="#6c6cf8" stroke-width=".8" stroke-linejoin="round"/></svg></div>
<div class="lb" style="left:36.3px;top:118.4px"><svg width="32" height="32" viewBox="0 0 32 32"><path d="M4.8 15.6 V25.4 H12.8 Z" fill="none" stroke="#5e5e5e" stroke-width="1"/><path d="M19 3.6 V14.2 H27 Z" fill="none" stroke="#f04c4c" stroke-width="1"/><path d="M14.4 22.4 Q20 21.6 21 16.6 L23.6 17.4 Q22.4 24.2 14.8 25.2 Z" fill="#fff" stroke="#6c6cf8" stroke-width=".9" stroke-linejoin="round" stroke-dasharray="2.2 .8"/></svg></div>
<div class="lb" style="left:1.3px;top:153.4px"><svg width="32" height="32" viewBox="0 0 32 32"><path d="M17.9 4 H6.5 V15.2 Z" fill="none" stroke="#5e5e5e" stroke-width="1"/><path d="M17.9 4 L26.6 17.6 M6.5 15.2 L14.9 19.3" stroke="#6c6cf8" stroke-width=".8"/><path d="M14.9 19.3 V27.8 M26.8 19.3 V27.8" stroke="#5e5e5e" stroke-width="1"/><path d="M14.9 19.3 L20.8 12.6 L26.8 19.3 Z" fill="none" stroke="#f04c4c" stroke-width="1"/></svg></div>
<div class="lb on" style="left:1.3px;top:196.4px"><svg width="32" height="32" viewBox="0 0 32 32"><path d="M5.3 16.2 L22.2 8.5" stroke="#f01010" stroke-width="1.2"/><path d="M9.4 24.5 L26.4 16.6" stroke="#111" stroke-width="1.2"/><path d="M11.1 13.7 L14.7 22.0" stroke="#4444f4" stroke-width="1"/></svg></div>
<div class="lb" style="left:36.3px;top:196.4px"><svg width="32" height="32" viewBox="0 0 32 32"><path d="M4.2 15.7 L22.9 6.3" stroke="#f01010" stroke-width="1.1"/><path d="M8.9 24.6 L27.3 15.4" stroke="#111" stroke-width="1.1"/><circle cx="14.5" cy="21.7" r="1.9" fill="#f00000"/></svg></div>
<div class="lb" style="left:1.3px;top:239.4px"><svg width="32" height="32" viewBox="0 0 32 32"><path d="M3.9 3.8 L27.3 15.4" stroke="#111" stroke-width="1.1"/><path d="M3.9 25.7 L10.4 16.3" stroke="#111" stroke-width="1.1"/><path d="M10.4 16.3 L14.5 9.7" stroke="#f01010" stroke-width="1.2"/><g transform="translate(12.2 24.6) rotate(-60)"><path d="M0 -1.15 H7.2 V-2.9 L11.4 0 L7.2 2.9 V1.15 H0 Z" fill="#fff" stroke="#3c3cf4" stroke-width=".75" stroke-linejoin="round"/></g></svg></div>
<div class="lb" style="left:36.3px;top:239.4px"><svg width="32" height="32" viewBox="0 0 32 32"><path d="M5.7 4.7 L16.3 8.3 M5.7 26.1 L19 17.5" stroke="#111" stroke-width="1.1"/><path d="M16.3 8.3 L27 12.2 L19 17.5" fill="none" stroke="#f01010" stroke-width="1.2"/><g transform="translate(15 3.4) rotate(20)"><path d="M0 -1.15 H7.2 V-2.9 L11.4 0 L7.2 2.9 V1.15 H0 Z" fill="#fff" stroke="#3c3cf4" stroke-width=".75" stroke-linejoin="round"/></g><g transform="translate(16.4 25.4) rotate(-33)"><path d="M0 -1.15 H7.2 V-2.9 L11.4 0 L7.2 2.9 V1.15 H0 Z" fill="#fff" stroke="#3c3cf4" stroke-width=".75" stroke-linejoin="round"/></g></svg></div>
<div class="lb" style="left:1.3px;top:274.4px"><svg width="32" height="32" viewBox="0 0 32 32"><path d="M21.1 4 L12.2 16.4" stroke="#111" stroke-width="1.1"/><path d="M12.2 16.4 L6.3 25.3" stroke="#f01010" stroke-width="1.2"/><g transform="translate(19.6 12.4) rotate(112)"><path d="M0 -1.15 H6.2 V-2.9 L10.4 0 L6.2 2.9 V1.15 H0 Z" fill="#fff" stroke="#3c3cf4" stroke-width=".75" stroke-linejoin="round"/></g><path d="M22.8 17.6 L26.2 21 M26.2 17.6 L22.8 21" stroke="#333" stroke-width="1"/></svg></div>
<div class="lb" style="left:36.3px;top:274.4px"><svg width="32" height="32" viewBox="0 0 32 32"><path d="M16.4 6.3 H25.2 V11.1 H16.4 M16.4 14.8 H25.2 V23.6 H16.4" fill="none" stroke="#f01818" stroke-width="1.2"/><path d="M16.4 6.3 H8.6 Q3.6 6.3 3.6 11.3 V18.6 Q3.6 23.6 8.6 23.6 H16.4 M16.4 11.1 H9.2 V14.8 H16.4" fill="none" stroke="#222" stroke-width="1.4"/><path d="M11 17.7 H19.6 V16.099999999999998 L23.6 18.9 L19.6 21.7 V20.099999999999998 H11 Z" fill="#fff" stroke="#3c3cf4" stroke-width=".75" stroke-linejoin="round"/></svg></div>
<div class="lb" style="left:1.3px;top:309.4px"><svg width="32" height="32" viewBox="0 0 32 32"><path d="M1.4 14.4 L26.4 1.6 M12 28.6 L29 19.8 M10.8 1.8 L28.6 25" stroke="#f4c4c4" stroke-width=".9"/><path d="M9.6 20.6 A8 8 0 0 0 19 26" fill="none" stroke="#f4c0c0" stroke-width=".9"/><rect x="7.4" y="9.1" width="14.1" height="11.5" fill="none" stroke="#6c6cf8" stroke-width="1"/><path d="M9.6 20.6 A9 8.6 0 0 1 18.8 12.8 V20.6" fill="none" stroke="#666" stroke-width="1"/></svg></div>
<div class="lb" style="left:1.3px;top:352.4px"><svg width="32" height="32" viewBox="0 0 32 32"><path d="M6 6.3 H14.3 M24.6 16.3 V24.8" stroke="#111" stroke-width="1.1"/><path d="M14.3 6.3 L24.6 16.3" stroke="#f01010" stroke-width="1.2"/></svg></div>
<div class="lb" style="left:36.3px;top:352.4px"><svg width="32" height="32" viewBox="0 0 32 32"><path d="M6.2 6.3 H14.5 M24.7 16.3 V24.8" stroke="#111" stroke-width="1.1"/><path d="M14.5 6.3 A10.2 10 0 0 1 24.7 16.3" fill="none" stroke="#f01010" stroke-width="1.2"/><circle cx="14.5" cy="16.1" r=".9" fill="#2020f0"/></svg></div>
<div class="lb" style="left:1.3px;top:395.4px"><svg width="32" height="32" viewBox="0 0 32 32"><path d="M3.4 23.4 L18.8 3" stroke="#111" stroke-width="1.1"/><path d="M6 13.4 L21.6 12.2 L22.4 15.4 L8.4 16.4 Z" fill="#f4f4f4" stroke="#777" stroke-width=".6"/><path d="M12.4 6.2 L15 4.8 L18.4 13.4 L16.4 14.4 Z" fill="#f4f4f4" stroke="#777" stroke-width=".6"/><ellipse cx="24.6" cy="14.4" rx="4.2" ry="2.4" transform="rotate(-22 24.6 14.4)" fill="none" stroke="#d01818" stroke-width="1.9"/><ellipse cx="19" cy="23.2" rx="2.4" ry="4.2" transform="rotate(-14 19 23.2)" fill="none" stroke="#d01818" stroke-width="1.9"/><path d="M17 15.4 L18.2 19 M19.4 15 L20.8 13.6" stroke="#d01818" stroke-width="1.8"/><circle cx="12.2" cy="11" r="1.9" fill="#f00000"/></svg></div>
<div class="lb" style="left:36.3px;top:395.4px"><svg width="32" height="32" viewBox="0 0 32 32"><path d="M3.4 23.4 L18.8 3" stroke="#666" stroke-width="1.1"/><path d="M6 13.4 L21.6 12.2 L22.4 15.4 L8.4 16.4 Z" fill="#f4f4f4" stroke="#777" stroke-width=".6"/><path d="M12.4 6.2 L15 4.8 L18.4 13.4 L16.4 14.4 Z" fill="#f4f4f4" stroke="#777" stroke-width=".6"/><ellipse cx="24.6" cy="14.4" rx="4.2" ry="2.4" transform="rotate(-22 24.6 14.4)" fill="none" stroke="#f08888" stroke-width="1.9"/><ellipse cx="19" cy="23.2" rx="2.4" ry="4.2" transform="rotate(-14 19 23.2)" fill="none" stroke="#f08888" stroke-width="1.9"/><path d="M17 15.4 L18.2 19 M19.4 15 L20.8 13.6" stroke="#f08888" stroke-width="1.8"/><circle cx="13.6" cy="8.3" r="1.9" fill="#f08888"/><circle cx="7.4" cy="17.2" r="1.9" fill="#f08888"/></svg></div>
<div class="lb" style="left:1.3px;top:430.4px"><svg width="32" height="32" viewBox="0 0 32 32"><path d="M10.4 4.4 V24.9 M21.6 4.4 V24.9 M3.3 14.6 H28.6" stroke="#111" stroke-width="1.1"/><circle cx="10.4" cy="14.6" r="2" fill="#f00000"/><circle cx="21.6" cy="14.6" r="2" fill="#f00000"/></svg></div>
<div class="lb" style="left:36.3px;top:430.4px"><svg width="32" height="32" viewBox="0 0 32 32"><path d="M7.4 4.4 V24.9" stroke="#333" stroke-width=".8"/><path d="M18.6 4.4 V24.9" stroke="#111" stroke-width="1.1"/><path d="M7.4 11.5 H18.6 M7.4 18.3 H18.6" stroke="#999" stroke-width=".8" stroke-dasharray="1 1"/><path d="M18.6 11.5 H26.2 M18.6 18.3 H26.2" stroke="#111" stroke-width="1.6"/><circle cx="18.6" cy="11.5" r="2" fill="#f00000"/><circle cx="18.6" cy="18.3" r="2" fill="#f00000"/></svg></div>
<div class="lb" style="left:1.3px;top:465.4px"><svg width="32" height="32" viewBox="0 0 32 32"><path d="M10.4 4.4 V24.5 M21.6 4.4 V24.5" stroke="#111" stroke-width="1.1"/><path d="M10.4 14.4 H21.6" stroke="#111" stroke-width="1.6"/><path d="M4.2 13 L7 15.8 M7 13 L4.2 15.8 M25 13 L27.8 15.8 M27.8 13 L25 15.8 M3.4 14.4 H8 M24.2 14.4 H28.6" stroke="#6c6cf8" stroke-width=".8"/><circle cx="10.4" cy="14.4" r="2" fill="#f00000"/><circle cx="21.6" cy="14.4" r="2" fill="#f00000"/></svg></div>
<div class="lb" style="left:36.3px;top:465.4px"><svg width="32" height="32" viewBox="0 0 32 32"><path d="M4.8 25.9 L12.8 17.9 M18.4 12.6 L27.3 4.1" stroke="#111" stroke-width="1.2"/><circle cx="15.4" cy="15.3" r="1.9" fill="#f00000"/></svg></div>
<div class="lb" style="left:1.3px;top:507.4px"><svg width="32" height="32" viewBox="0 0 32 32"><rect x="4.7" y="9.3" width="23" height="14.3" fill="#fff" stroke="#111" stroke-width="1"/><text x="6.6" y="21.6" font-family="Liberation Serif,serif" font-size="15.5" fill="#111">A</text><path d="M20.2 11.4 V21.8" stroke="#111" stroke-width="1"/></svg></div>
<div class="lb" style="left:36.3px;top:507.4px"><svg width="32" height="32" viewBox="0 0 32 32"><rect x="3.3" y="9.3" width="25.5" height="15.3" fill="#f4f4f4" stroke="#111" stroke-width="1"/><path d="M16 9.3 V24.6" stroke="#111" stroke-width="1"/><circle cx="9.7" cy="17" r="3" fill="none" stroke="#111" stroke-width="1"/><path d="M5.4 17 H14 M9.7 12.6 V21.4" stroke="#111" stroke-width="1"/><text x="17.4" y="22.4" font-family="Liberation Sans,sans-serif" font-size="11.5" fill="#111">.1</text><g transform="translate(14.5 14.6) rotate(45)"><path d="M0 0 L-1.3 -3.4 H1.3 Z" fill="#e8cc9c" stroke="#7a5a34" stroke-width=".35"/><path d="M0 0 L-.5 -1.1 H.5 Z" fill="#222"/><rect x="-1.3" y="-12.4" width="2.6" height="9.0" fill="#f0a630" stroke="#a8701c" stroke-width=".35"/><rect x="-1.3" y="-14.4" width="2.6" height="2.6" rx=".7" fill="#e03020" stroke="#a02014" stroke-width=".35"/></g></svg></div>
<div class="lb" style="left:1.3px;top:542.4px"><svg width="32" height="32" viewBox="0 0 32 32"><defs><clipPath id="c19"><path d="M4.7 19.3 L11.3 13.1 H25.5 V26.4 H4.7 Z"/></clipPath></defs><path d="M4.7 19.3 L11.3 13.1 H25.5 V26.4 H4.7 Z" fill="#dcdcdc"/><g clip-path="url(#c19)" stroke="#707070" stroke-width=".6"><path d="M-11.6 28 L4.4 12"/><path d="M-8.7 28 L7.300000000000001 12"/><path d="M-5.8 28 L10.2 12"/><path d="M-2.9 28 L13.1 12"/><path d="M0.0 28 L16.0 12"/><path d="M2.9 28 L18.9 12"/><path d="M5.8 28 L21.8 12"/><path d="M8.7 28 L24.7 12"/><path d="M11.6 28 L27.6 12"/><path d="M14.5 28 L30.5 12"/><path d="M17.4 28 L33.4 12"/><path d="M20.3 28 L36.3 12"/><path d="M23.2 28 L39.2 12"/><path d="M26.099999999999998 28 L42.099999999999994 12"/><path d="M29.0 28 L45.0 12"/><path d="M31.9 28 L47.9 12"/></g><path d="M4.7 19.3 L11.3 13.1 H25.5 V26.4 H4.7 Z" fill="none" stroke="#555" stroke-width="1"/><circle cx="17.6" cy="20.6" r="3" fill="#fff" stroke="#111" stroke-width="1"/><g transform="translate(15.8 15.2) rotate(45)"><path d="M0 0 L-1.3 -3.4 H1.3 Z" fill="#e8cc9c" stroke="#7a5a34" stroke-width=".35"/><path d="M0 0 L-.5 -1.1 H.5 Z" fill="#222"/><rect x="-1.3" y="-12.4" width="2.6" height="9.0" fill="#f0a630" stroke="#a8701c" stroke-width=".35"/><rect x="-1.3" y="-14.4" width="2.6" height="2.6" rx=".7" fill="#e03020" stroke="#a02014" stroke-width=".35"/></g></svg></div>
<div class="lb" style="left:1.3px;top:585.4px"><svg width="32" height="32" viewBox="0 0 32 32"><defs><linearGradient id="g20" x1="0" y1="0" x2="1" y2="0"><stop offset="0" stop-color="#e86a6a"/><stop offset=".5" stop-color="#dc5050"/><stop offset="1" stop-color="#c04444"/></linearGradient></defs><path d="M19.8 7.6 Q15 2.4 10.4 9" fill="none" stroke="#8a8a8a" stroke-width="1.3"/><g transform="translate(22.8 16.6) rotate(-17)"><rect x="-3.4" y="-10.4" width="6.8" height="20.8" rx="1.6" fill="url(#g20)"/><ellipse cx="0" cy="-10" rx="3.4" ry="1.2" fill="#c86060"/></g><g stroke="#c8c070" stroke-width=".8"><path d="M3.4 11.8 H10.6 M7 8.2 V15.4 M4.5 9.3 L9.5 14.3 M9.5 9.3 L4.5 14.3"/></g><circle cx="7" cy="11.8" r="2.2" fill="#f4e040"/><circle cx="7" cy="11.8" r="1" fill="#fffad0"/></svg></div>
<div class="lb" style="left:1.3px;top:629.4px"><svg width="32" height="32" viewBox="0 0 32 32"><rect x="18" y="6.4" width="7.8" height="6" fill="#b4b4b4" stroke="#8a8a8a" stroke-width=".7"/><rect x="3.6" y="17.4" width="7.8" height="6" fill="#b4b4b4" stroke="#8a8a8a" stroke-width=".7"/><rect x="8.4" y="10.7" width="12.5" height="8.5" fill="#f6f2dc" stroke="#8c8c7c" stroke-width=".8"/></svg></div>
<div class="lb" style="left:36.3px;top:629.4px"><svg width="32" height="32" viewBox="0 0 32 32"><rect x="8.6" y="11.6" width="12.6" height="8" fill="#f6f2dc" stroke="#8c8c7c" stroke-width=".8"/><rect x="17.9" y="6.4" width="7.8" height="6" fill="#b4b4b4" stroke="#8a8a8a" stroke-width=".7"/><rect x="3.4" y="17.4" width="8" height="6" fill="#b4b4b4" stroke="#8a8a8a" stroke-width=".7"/></svg></div>
<div class="lb" style="left:1.3px;top:671.4px"><svg width="32" height="32" viewBox="0 0 32 32"><rect x="6.4" y="5.4" width="17.6" height="5.8" rx="1.4" fill="#f0dc5c" stroke="#8c8c6c" stroke-width=".8"/><path d="M24 8.2 H27 V14 H16 V20" fill="none" stroke="#999" stroke-width="1.2"/></svg></div>
</div>
<div id="tabbar" class="abs">
<svg class="abs" style="left:23.4px;top:3.8px" width="15" height="15" viewBox="0 0 16 16"><circle cx="7.4" cy="7.6" r="6.2" fill="#f4f6fa" stroke="#1c2c74" stroke-width="1.9"/><path d="M3 7.6 H11.8 M7.4 3.2 V12 M4.2 4.6 Q7.4 7 10.6 4.6 M4.2 10.6 Q7.4 8.2 10.6 10.6" stroke="#8a9ac8" stroke-width=".6" fill="none"/><path d="M7.6 6.4 L13.6 12.6 L12.2 14 L6.2 7.8 Z" fill="#f0a020" stroke="#b06c10" stroke-width=".4"/><path d="M12.8 13.2 L15 15.4 L14.4 13 Z" fill="#e03030"/><path d="M6.2 7.8 L5.6 5.8 L7.6 6.4 Z" fill="#f4e0b0"/></svg>
<span class="t" style="left:536px;top:6px;font-size:12.4px;color:#111">offset.dxf</span>
</div>
<div id="rulerT" class="abs">
<span class="t" style="left:23px;top:2px;font-size:9.7px;color:#303030">8</span>
<i class="abs" style="left:23px;top:16px;width:1px;height:8px;background:#4a4a4a"></i>
<span class="t" style="left:35.7px;top:2px;width:20px;text-align:center;font-size:9.7px;color:#303030">39</span>
<i class="abs" style="left:45.2px;top:16px;width:1px;height:8px;background:#4a4a4a"></i>
<span class="t" style="left:58.2px;top:2px;width:20px;text-align:center;font-size:9.7px;color:#303030">40</span>
<i class="abs" style="left:67.7px;top:16px;width:1px;height:8px;background:#4a4a4a"></i>
<span class="t" style="left:80.7px;top:2px;width:20px;text-align:center;font-size:9.7px;color:#303030">41</span>
<i class="abs" style="left:90.2px;top:16px;width:1px;height:8px;background:#4a4a4a"></i>
<span class="t" style="left:103.2px;top:2px;width:20px;text-align:center;font-size:9.7px;color:#303030">42</span>
<i class="abs" style="left:112.7px;top:16px;width:1px;height:8px;background:#4a4a4a"></i>
<span class="t" style="left:125.7px;top:2px;width:20px;text-align:center;font-size:9.7px;color:#303030">43</span>
<i class="abs" style="left:135.2px;top:16px;width:1px;height:8px;background:#4a4a4a"></i>
<span class="t" style="left:148.2px;top:2px;width:20px;text-align:center;font-size:9.7px;color:#303030">44</span>
<i class="abs" style="left:157.7px;top:16px;width:1px;height:8px;background:#4a4a4a"></i>
<span class="t" style="left:170.7px;top:2px;width:20px;text-align:center;font-size:9.7px;color:#303030">45</span>
<i class="abs" style="left:180.2px;top:16px;width:1px;height:8px;background:#4a4a4a"></i>
<span class="t" style="left:193.2px;top:2px;width:20px;text-align:center;font-size:9.7px;color:#303030">46</span>
<i class="abs" style="left:202.7px;top:16px;width:1px;height:8px;background:#4a4a4a"></i>
<span class="t" style="left:215.7px;top:2px;width:20px;text-align:center;font-size:9.7px;color:#303030">47</span>
<i class="abs" style="left:225.2px;top:16px;width:1px;height:8px;background:#4a4a4a"></i>
<span class="t" style="left:238.2px;top:2px;width:20px;text-align:center;font-size:9.7px;color:#303030">48</span>
<i class="abs" style="left:247.7px;top:16px;width:1px;height:8px;background:#4a4a4a"></i>
<span class="t" style="left:260.7px;top:2px;width:20px;text-align:center;font-size:9.7px;color:#303030">49</span>
<i class="abs" style="left:270.2px;top:16px;width:1px;height:8px;background:#4a4a4a"></i>
<span class="t" style="left:283.2px;top:2px;width:20px;text-align:center;font-size:9.7px;color:#303030">50</span>
<i class="abs" style="left:292.7px;top:16px;width:1px;height:8px;background:#4a4a4a"></i>
<span class="t" style="left:305.7px;top:2px;width:20px;text-align:center;font-size:9.7px;color:#303030">51</span>
<i class="abs" style="left:315.2px;top:16px;width:1px;height:8px;background:#4a4a4a"></i>
<span class="t" style="left:328.2px;top:2px;width:20px;text-align:center;font-size:9.7px;color:#303030">52</span>
<i class="abs" style="left:337.7px;top:16px;width:1px;height:8px;background:#4a4a4a"></i>
<span class="t" style="left:350.7px;top:2px;width:20px;text-align:center;font-size:9.7px;color:#303030">53</span>
<i class="abs" style="left:360.2px;top:16px;width:1px;height:8px;background:#4a4a4a"></i>
<span class="t" style="left:373.2px;top:2px;width:20px;text-align:center;font-size:9.7px;color:#303030">54</span>
<i class="abs" style="left:382.7px;top:16px;width:1px;height:8px;background:#4a4a4a"></i>
<span class="t" style="left:395.7px;top:2px;width:20px;text-align:center;font-size:9.7px;color:#303030">55</span>
<i class="abs" style="left:405.2px;top:16px;width:1px;height:8px;background:#4a4a4a"></i>
<span class="t" style="left:418.2px;top:2px;width:20px;text-align:center;font-size:9.7px;color:#303030">56</span>
<i class="abs" style="left:427.7px;top:16px;width:1px;height:8px;background:#4a4a4a"></i>
<span class="t" style="left:440.7px;top:2px;width:20px;text-align:center;font-size:9.7px;color:#303030">57</span>
<i class="abs" style="left:450.2px;top:16px;width:1px;height:8px;background:#4a4a4a"></i>
<span class="t" style="left:463.2px;top:2px;width:20px;text-align:center;font-size:9.7px;color:#303030">58</span>
<i class="abs" style="left:472.7px;top:16px;width:1px;height:8px;background:#4a4a4a"></i>
<span class="t" style="left:485.7px;top:2px;width:20px;text-align:center;font-size:9.7px;color:#303030">59</span>
<i class="abs" style="left:495.2px;top:16px;width:1px;height:8px;background:#4a4a4a"></i>
<span class="t" style="left:508.2px;top:2px;width:20px;text-align:center;font-size:9.7px;color:#303030">60</span>
<i class="abs" style="left:517.7px;top:16px;width:1px;height:8px;background:#4a4a4a"></i>
<span class="t" style="left:530.7px;top:2px;width:20px;text-align:center;font-size:9.7px;color:#303030">61</span>
<i class="abs" style="left:540.2px;top:16px;width:1px;height:8px;background:#4a4a4a"></i>
<span class="t" style="left:553.2px;top:2px;width:20px;text-align:center;font-size:9.7px;color:#303030">62</span>
<i class="abs" style="left:562.7px;top:16px;width:1px;height:8px;background:#4a4a4a"></i>
<span class="t" style="left:575.7px;top:2px;width:20px;text-align:center;font-size:9.7px;color:#303030">63</span>
<i class="abs" style="left:585.2px;top:16px;width:1px;height:8px;background:#4a4a4a"></i>
<span class="t" style="left:598.2px;top:2px;width:20px;text-align:center;font-size:9.7px;color:#303030">64</span>
<i class="abs" style="left:607.7px;top:16px;width:1px;height:8px;background:#4a4a4a"></i>
<span class="t" style="left:620.7px;top:2px;width:20px;text-align:center;font-size:9.7px;color:#303030">65</span>
<i class="abs" style="left:630.2px;top:16px;width:1px;height:8px;background:#4a4a4a"></i>
<span class="t" style="left:643.2px;top:2px;width:20px;text-align:center;font-size:9.7px;color:#303030">66</span>
<i class="abs" style="left:652.7px;top:16px;width:1px;height:8px;background:#4a4a4a"></i>
<span class="t" style="left:665.7px;top:2px;width:20px;text-align:center;font-size:9.7px;color:#303030">67</span>
<i class="abs" style="left:675.2px;top:16px;width:1px;height:8px;background:#4a4a4a"></i>
<span class="t" style="left:688.2px;top:2px;width:20px;text-align:center;font-size:9.7px;color:#303030">68</span>
<i class="abs" style="left:697.7px;top:16px;width:1px;height:8px;background:#4a4a4a"></i>
<span class="t" style="left:710.7px;top:2px;width:20px;text-align:center;font-size:9.7px;color:#303030">69</span>
<i class="abs" style="left:720.2px;top:16px;width:1px;height:8px;background:#4a4a4a"></i>
<span class="t" style="left:733.2px;top:2px;width:20px;text-align:center;font-size:9.7px;color:#303030">70</span>
<i class="abs" style="left:742.7px;top:16px;width:1px;height:8px;background:#4a4a4a"></i>
<span class="t" style="left:755.7px;top:2px;width:20px;text-align:center;font-size:9.7px;color:#303030">71</span>
<i class="abs" style="left:765.2px;top:16px;width:1px;height:8px;background:#4a4a4a"></i>
<span class="t" style="left:778.2px;top:2px;width:20px;text-align:center;font-size:9.7px;color:#303030">72</span>
<i class="abs" style="left:787.7px;top:16px;width:1px;height:8px;background:#4a4a4a"></i>
<span class="t" style="left:800.7px;top:2px;width:20px;text-align:center;font-size:9.7px;color:#303030">73</span>
<i class="abs" style="left:810.2px;top:16px;width:1px;height:8px;background:#4a4a4a"></i>
<span class="t" style="left:823.2px;top:2px;width:20px;text-align:center;font-size:9.7px;color:#303030">74</span>
<i class="abs" style="left:832.7px;top:16px;width:1px;height:8px;background:#4a4a4a"></i>
<span class="t" style="left:845.7px;top:2px;width:20px;text-align:center;font-size:9.7px;color:#303030">75</span>
<i class="abs" style="left:855.2px;top:16px;width:1px;height:8px;background:#4a4a4a"></i>
<span class="t" style="left:868.2px;top:2px;width:20px;text-align:center;font-size:9.7px;color:#303030">76</span>
<i class="abs" style="left:877.7px;top:16px;width:1px;height:8px;background:#4a4a4a"></i>
<span class="t" style="left:890.7px;top:2px;width:20px;text-align:center;font-size:9.7px;color:#303030">77</span>
<i class="abs" style="left:900.2px;top:16px;width:1px;height:8px;background:#4a4a4a"></i>
<span class="t" style="left:913.2px;top:2px;width:20px;text-align:center;font-size:9.7px;color:#303030">78</span>
<i class="abs" style="left:922.7px;top:16px;width:1px;height:8px;background:#4a4a4a"></i>
<span class="t" style="left:935.7px;top:2px;width:20px;text-align:center;font-size:9.7px;color:#303030">79</span>
<i class="abs" style="left:945.2px;top:16px;width:1px;height:8px;background:#4a4a4a"></i>
<span class="t" style="left:958.2px;top:2px;width:20px;text-align:center;font-size:9.7px;color:#303030">80</span>
<i class="abs" style="left:967.7px;top:16px;width:1px;height:8px;background:#4a4a4a"></i>
<span class="t" style="left:980.7px;top:2px;width:20px;text-align:center;font-size:9.7px;color:#303030">81</span>
<i class="abs" style="left:990.2px;top:16px;width:1px;height:8px;background:#4a4a4a"></i>
<span class="t" style="left:1003.2px;top:2px;width:20px;text-align:center;font-size:9.7px;color:#303030">82</span>
<i class="abs" style="left:1012.7px;top:16px;width:1px;height:8px;background:#4a4a4a"></i>
<span class="t" style="left:1025.7px;top:2px;width:20px;text-align:center;font-size:9.7px;color:#303030">83</span>
<i class="abs" style="left:1035.2px;top:16px;width:1px;height:8px;background:#4a4a4a"></i>
<span class="t" style="left:1048.2px;top:2px;width:20px;text-align:center;font-size:9.7px;color:#303030">84</span>
<i class="abs" style="left:1057.7px;top:16px;width:1px;height:8px;background:#4a4a4a"></i>
<svg class="abs" style="left:246px;top:14px" width="12" height="7"><path d="M0.3 .3 L11.7 .3 L6 6.6 Z" fill="#000"/></svg>
</div>
<div id="rulerL" class="abs">
<span class="t" style="left:-4.5px;top:9.0px;width:20px;height:11px;text-align:center;font-size:9.7px;color:#303030;transform:rotate(-90deg)">17</span>
<i class="abs" style="left:15px;top:14.0px;width:8px;height:1px;background:#4a4a4a"></i>
<span class="t" style="left:-4.5px;top:31.5px;width:20px;height:11px;text-align:center;font-size:9.7px;color:#303030;transform:rotate(-90deg)">16</span>
<i class="abs" style="left:15px;top:36.5px;width:8px;height:1px;background:#4a4a4a"></i>
<span class="t" style="left:-4.5px;top:54.0px;width:20px;height:11px;text-align:center;font-size:9.7px;color:#303030;transform:rotate(-90deg)">15</span>
<i class="abs" style="left:15px;top:59.0px;width:8px;height:1px;background:#4a4a4a"></i>
<span class="t" style="left:-4.5px;top:76.5px;width:20px;height:11px;text-align:center;font-size:9.7px;color:#303030;transform:rotate(-90deg)">14</span>
<i class="abs" style="left:15px;top:81.5px;width:8px;height:1px;background:#4a4a4a"></i>
<span class="t" style="left:-4.5px;top:99.0px;width:20px;height:11px;text-align:center;font-size:9.7px;color:#303030;transform:rotate(-90deg)">13</span>
<i class="abs" style="left:15px;top:104.0px;width:8px;height:1px;background:#4a4a4a"></i>
<span class="t" style="left:-4.5px;top:121.5px;width:20px;height:11px;text-align:center;font-size:9.7px;color:#303030;transform:rotate(-90deg)">12</span>
<i class="abs" style="left:15px;top:126.5px;width:8px;height:1px;background:#4a4a4a"></i>
<span class="t" style="left:-4.5px;top:144.0px;width:20px;height:11px;text-align:center;font-size:9.7px;color:#303030;transform:rotate(-90deg)">11</span>
<i class="abs" style="left:15px;top:149.0px;width:8px;height:1px;background:#4a4a4a"></i>
<span class="t" style="left:-4.5px;top:166.5px;width:20px;height:11px;text-align:center;font-size:9.7px;color:#303030;transform:rotate(-90deg)">10</span>
<i class="abs" style="left:15px;top:171.5px;width:8px;height:1px;background:#4a4a4a"></i>
<span class="t" style="left:-4.5px;top:189.0px;width:20px;height:11px;text-align:center;font-size:9.7px;color:#303030;transform:rotate(-90deg)">9</span>
<i class="abs" style="left:15px;top:194.0px;width:8px;height:1px;background:#4a4a4a"></i>
<span class="t" style="left:-4.5px;top:211.5px;width:20px;height:11px;text-align:center;font-size:9.7px;color:#303030;transform:rotate(-90deg)">8</span>
<i class="abs" style="left:15px;top:216.5px;width:8px;height:1px;background:#4a4a4a"></i>
<span class="t" style="left:-4.5px;top:234.0px;width:20px;height:11px;text-align:center;font-size:9.7px;color:#303030;transform:rotate(-90deg)">7</span>
<i class="abs" style="left:15px;top:239.0px;width:8px;height:1px;background:#4a4a4a"></i>
<span class="t" style="left:-4.5px;top:256.5px;width:20px;height:11px;text-align:center;font-size:9.7px;color:#303030;transform:rotate(-90deg)">6</span>
<i class="abs" style="left:15px;top:261.5px;width:8px;height:1px;background:#4a4a4a"></i>
<span class="t" style="left:-4.5px;top:279.0px;width:20px;height:11px;text-align:center;font-size:9.7px;color:#303030;transform:rotate(-90deg)">5</span>
<i class="abs" style="left:15px;top:284.0px;width:8px;height:1px;background:#4a4a4a"></i>
<span class="t" style="left:-4.5px;top:301.5px;width:20px;height:11px;text-align:center;font-size:9.7px;color:#303030;transform:rotate(-90deg)">4</span>
<i class="abs" style="left:15px;top:306.5px;width:8px;height:1px;background:#4a4a4a"></i>
<span class="t" style="left:-4.5px;top:324.0px;width:20px;height:11px;text-align:center;font-size:9.7px;color:#303030;transform:rotate(-90deg)">3</span>
<i class="abs" style="left:15px;top:329.0px;width:8px;height:1px;background:#4a4a4a"></i>
<span class="t" style="left:-4.5px;top:346.5px;width:20px;height:11px;text-align:center;font-size:9.7px;color:#303030;transform:rotate(-90deg)">2</span>
<i class="abs" style="left:15px;top:351.5px;width:8px;height:1px;background:#4a4a4a"></i>
<span class="t" style="left:-4.5px;top:369.0px;width:20px;height:11px;text-align:center;font-size:9.7px;color:#303030;transform:rotate(-90deg)">1</span>
<i class="abs" style="left:15px;top:374.0px;width:8px;height:1px;background:#4a4a4a"></i>
<span class="t" style="left:-4.5px;top:391.5px;width:20px;height:11px;text-align:center;font-size:9.7px;color:#303030;transform:rotate(-90deg)">0</span>
<i class="abs" style="left:15px;top:396.5px;width:8px;height:1px;background:#4a4a4a"></i>
<span class="t" style="left:-4.5px;top:414.0px;width:20px;height:11px;text-align:center;font-size:9.7px;color:#303030;transform:rotate(-90deg)">-1</span>
<i class="abs" style="left:15px;top:419.0px;width:8px;height:1px;background:#4a4a4a"></i>
<span class="t" style="left:-4.5px;top:436.5px;width:20px;height:11px;text-align:center;font-size:9.7px;color:#303030;transform:rotate(-90deg)">-2</span>
<i class="abs" style="left:15px;top:441.5px;width:8px;height:1px;background:#4a4a4a"></i>
<span class="t" style="left:-4.5px;top:459.0px;width:20px;height:11px;text-align:center;font-size:9.7px;color:#303030;transform:rotate(-90deg)">-3</span>
<i class="abs" style="left:15px;top:464.0px;width:8px;height:1px;background:#4a4a4a"></i>
<span class="t" style="left:-4.5px;top:481.5px;width:20px;height:11px;text-align:center;font-size:9.7px;color:#303030;transform:rotate(-90deg)">-4</span>
<i class="abs" style="left:15px;top:486.5px;width:8px;height:1px;background:#4a4a4a"></i>
<span class="t" style="left:-4.5px;top:504.0px;width:20px;height:11px;text-align:center;font-size:9.7px;color:#303030;transform:rotate(-90deg)">-5</span>
<i class="abs" style="left:15px;top:509.0px;width:8px;height:1px;background:#4a4a4a"></i>
<span class="t" style="left:-4.5px;top:526.5px;width:20px;height:11px;text-align:center;font-size:9.7px;color:#303030;transform:rotate(-90deg)">-6</span>
<i class="abs" style="left:15px;top:531.5px;width:8px;height:1px;background:#4a4a4a"></i>
<span class="t" style="left:-4.5px;top:549.0px;width:20px;height:11px;text-align:center;font-size:9.7px;color:#303030;transform:rotate(-90deg)">-7</span>
<i class="abs" style="left:15px;top:554.0px;width:8px;height:1px;background:#4a4a4a"></i>
<span class="t" style="left:-4.5px;top:569px;width:20px;height:11px;text-align:center;font-size:9.7px;color:#303030;transform:rotate(-90deg)">8</span>
<svg class="abs" style="left:13px;top:278px" width="7" height="12"><path d="M.3 .3 L.3 11.7 L6.6 6 Z" fill="#000"/></svg>
</div>
<div id="canvas" class="abs">
<svg class="abs" style="left:0;top:0" width="1044" height="576" viewBox="0 0 1044 576"><defs><pattern id="gd" x="0" y="-9" width="45" height="45" patternUnits="userSpaceOnUse"><rect x="0" y="0" width="1" height="1" fill="#353535"/><rect x="22" y="0" width="1" height="1" fill="#353535"/><rect x="0" y="23" width="1" height="1" fill="#353535"/><rect x="22" y="23" width="1" height="1" fill="#353535"/></pattern><radialGradient id="ring" cx="50%" cy="50%" r="50%"><stop offset="0.75" stop-color="#3c4852" stop-opacity="0"/><stop offset="0.83" stop-color="#2c363e" stop-opacity=".75"/><stop offset="0.885" stop-color="#42505c"/><stop offset="0.935" stop-color="#596b7a"/><stop offset="0.975" stop-color="#4c5d6b"/><stop offset="1" stop-color="#3e4b56" stop-opacity=".15"/></radialGradient></defs><rect width="1044" height="576" fill="url(#gd)"/><rect x="44.7" y="0" width="1.4" height="576" fill="#1b1b1b"/><rect x="269.7" y="0" width="1.4" height="576" fill="#1b1b1b"/><rect x="494.7" y="0" width="1.4" height="576" fill="#1b1b1b"/><rect x="719.7" y="0" width="1.4" height="576" fill="#1b1b1b"/><rect x="944.7" y="0" width="1.4" height="576" fill="#1b1b1b"/><rect x="0" y="171.5" width="1044" height="1.4" fill="#1b1b1b"/><rect x="0" y="396.5" width="1044" height="1.4" fill="#1b1b1b"/><circle cx="228.9" cy="283.8" r="39.5" fill="url(#ring)"/><circle cx="228.9" cy="283.8" r="33.2" fill="none" stroke="#000" stroke-opacity=".22" stroke-width=".55"/><circle cx="228.9" cy="283.8" r="34.6" fill="none" stroke="#000" stroke-opacity=".22" stroke-width=".55"/><circle cx="228.9" cy="283.8" r="36" fill="none" stroke="#000" stroke-opacity=".22" stroke-width=".55"/><circle cx="228.9" cy="283.8" r="37.4" fill="none" stroke="#000" stroke-opacity=".22" stroke-width=".55"/><circle cx="228.9" cy="283.8" r="38.8" fill="none" stroke="#000" stroke-opacity=".22" stroke-width=".55"/><rect x="212.9" y="281.8" width="32" height="4" fill="#b9b9b9"/><rect x="226.9" y="268.3" width="4" height="31" fill="#b9b9b9"/><circle cx="228.9" cy="283.8" r="2" fill="#000" stroke="#d8d8d8" stroke-width=".6"/><line x1="180.2" y1="397.0" x2="270.2" y2="172.0" stroke="#b4b4b4" stroke-width="1.2"/><line x1="190.6" y1="401.2" x2="280.6" y2="176.2" stroke="#f00000" stroke-width="1.25"/><path d="M405.2 172.0 A144.5 144.5 0 0 0 315.2 397.0" fill="none" stroke="#f2f2f2" stroke-width="1.25"/><circle cx="517.7" cy="284.5" r="112.5" fill="none" stroke="#f2f2f2" stroke-width="1.25"/><ellipse cx="720.2" cy="284.5" rx="36.0" ry="112.5" fill="none" stroke="#f2f2f2" stroke-width="1.25"/><path d="M900.2 172.0 C809.1 235.0 923.6 353.4 810.2 397.0" fill="none" stroke="#f2f2f2" stroke-width="1.25"/></svg>
</div>
<div id="vsb" class="abs"><div class="thumb" style="left:4.5px;top:130.5px;width:7px;height:320px"></div></div>
<div id="hsb" class="abs"><div class="thumb" style="left:148px;top:4.3px;width:685px;height:7.5px"></div>
<div class="abs" style="left:1004px;top:1.3px;width:54px;height:13px;background:#ececec"></div>
<span class="t" style="right:.7px;top:3.2px;font-size:12.2px;color:#111">1 &lt; 10</span></div>
<div id="hist" class="abs"><span class="t" style="left:5px;top:3px;font-size:12.9px;letter-spacing:.36px;color:#0000d0"><i>Opdracht:</i> offset</span>
<div class="abs" style="left:1069px;top:0;width:12px;height:19px;background:#fafafa;border-left:1px solid #e8e8e8"></div>
<div class="thumb" style="left:1070px;top:0px;width:7.6px;height:17px;border-radius:1px 1px 4px 4px"></div></div>
<div id="cmd" class="abs"><span class="t" style="left:1px;top:8px;font-size:13.4px;color:#111">Kies lijn, boog, cirkel, ellips, spline of polylijn:</span>
<div class="abs" style="left:270px;top:4px;width:785px;height:19px;background:#fff"></div>
<div class="abs" style="left:1055px;top:1px;width:26px;height:26px;background:#f3f3f3;border:1px solid #b0b0b0"></div>
<svg class="abs" style="left:1061px;top:9px" width="15" height="11"><rect x=".5" y=".5" width="13" height="9" fill="#f0f0f0" stroke="#666"/><rect x="0" y="0" width="14" height="3" fill="#111"/><rect x="10" y="1" width="1.2" height="1" fill="#aaa"/></svg>
</div>
<div id="status" class="abs">
<span class="t" style="left:2px;top:10.6px">48.1778,5.0222</span><span class="t" style="left:2px;top:30.6px">@48.1778,5.0222</span>
<i class="abs" style="left:253px;top:4px;width:1px;height:40px;background:#f4f4f4;border-left:1px solid #a9a9a9;width:2px"></i>
<span class="t" style="left:257px;top:10.6px">48.4388&lt;6°</span><span class="t" style="left:257px;top:30.6px">@48.4388&lt;6°</span>
<i class="dot" style="left:506px;top:21px"></i>
<span class="t" style="right:801.5px;top:13.5px;text-align:right;line-height:10.7px;width:200px">Kies lijn, boog, cirkel, ellips, spline of<br>polylijn</span>
<svg class="abs" style="left:716px;top:7px" width="20" height="32" viewBox="0 0 20 32"><path d="M1.4 13.4 Q1.4 1 10 1 Q18.6 1 18.6 13.4 V22 Q18.6 30.6 10 30.6 Q1.4 30.6 1.4 22 Z" fill="#fff" stroke="#222" stroke-width=".9"/><path d="M1.4 13.8 Q5 12.2 8.6 12.2 M18.6 13.8 Q15 12.2 11.4 12.2 M10 9.4 V12.6" fill="none" stroke="#222" stroke-width=".8"/><rect x="8.6" y="2.8" width="2.8" height="6.6" rx="1.4" fill="#fff" stroke="#222" stroke-width=".8"/></svg>
<span class="t" style="left:754px;top:20px">Annuleer</span>
<i class="dot" style="left:940.3px;top:21px"></i>
<span class="t" style="left:949px;top:20px">Geen objecten geselecteerd.</span>
<i class="dot" style="left:1269px;top:21px"></i>
</div>
<div id="rp" class="abs">
<div class="abs" style="left:0;top:0;width:2px;height:690px;background:#e4e4e4"></div>
<div class="abs" style="left:2px;top:0;width:298px;height:23px;background:linear-gradient(#eeeeee,#e8e8e8 50%,#d9d9d9)"></div>
<svg class="abs" style="left:3px;top:3px" width="34" height="15" viewBox="0 0 34 15"><circle cx="7.2" cy="7.2" r="6.7" fill="#6a6a6a"/><path d="M4.3 4.3 L10.1 10.1 M10.1 4.3 L4.3 10.1" stroke="#f4f4f4" stroke-width="2" stroke-linecap="round"/><circle cx="25.2" cy="7.2" r="6.7" fill="#6a6a6a"/><path d="M23.6 5.6 V4.4 H28.4 V8 H27.4" fill="none" stroke="#fff" stroke-width="1"/><rect x="22" y="6.4" width="4.8" height="3.8" fill="none" stroke="#fff" stroke-width="1.1"/></svg>
<span class="t" style="left:143.3px;top:5px;font-size:12px;color:#111">Lagenlijst</span>
<div class="abs" style="left:2px;top:48px;width:298px;height:642px;background:#fff"></div>
<div class="abs" style="left:1.3px;top:22.3px;width:298.7px;height:25.7px;background:#a6a6a6"></div>
<div class="abs" style="left:2.3px;top:23.4px;width:58.2px;height:23.5px;background:linear-gradient(#efefef,#f8f8f8 60%,#f4f4f4)"><svg class="abs" style="left:21.1px;top:3.4px" width="16" height="16" viewBox="0 0 18 18"><path d="M1 9.4 Q4 3.2 9.4 3.2 Q14.6 3.2 17.2 9 Q13.8 14.6 9 14.6 Q4.2 14.6 1 9.4 Z" fill="#000"/><path d="M3.4 9.6 Q5.6 6.2 9.2 6.2 Q12.8 6.2 14.8 9.4 Q12.6 12.6 9.2 12.6 Q5.6 12.6 3.4 9.6 Z" fill="#fff"/><circle cx="9.2" cy="9" r="3.1" fill="#000"/><circle cx="8.2" cy="7.8" r=".9" fill="#fff"/><path d="M1 9.4 Q4.6 1.6 10.4 2.6 Q15 3.4 17.2 9" fill="none" stroke="#000" stroke-width="1.6"/></svg></div>
<div class="abs" style="left:61.6px;top:23.4px;width:58.8px;height:23.5px;background:linear-gradient(#efefef,#f8f8f8 60%,#f4f4f4)"><svg class="abs" style="left:21.4px;top:3.4px" width="16" height="16" viewBox="0 0 18 18"><path d="M1 9.4 Q4 3.2 9.4 3.2 Q14.6 3.2 17.2 9 Q13.8 14.6 9 14.6 Q4.2 14.6 1 9.4 Z" fill="#b2b2b2"/><path d="M3.4 9.6 Q5.6 6.2 9.2 6.2 Q12.8 6.2 14.8 9.4 Q12.6 12.6 9.2 12.6 Q5.6 12.6 3.4 9.6 Z" fill="#fff"/><circle cx="9.2" cy="9" r="3.1" fill="#b2b2b2"/><circle cx="8.2" cy="7.8" r=".9" fill="#fff"/><path d="M1 9.4 Q4.6 1.6 10.4 2.6 Q15 3.4 17.2 9" fill="none" stroke="#b2b2b2" stroke-width="1.6"/></svg></div>
<div class="abs" style="left:121.6px;top:23.4px;width:58.8px;height:23.5px;background:linear-gradient(#efefef,#f8f8f8 60%,#f4f4f4)"><svg class="abs" style="left:21.4px;top:3.4px" width="16" height="16" viewBox="0 0 18 18"><path d="M2.4 7.6 H7.6 V2.4 H10.4 V7.6 H15.6 V10.4 H10.4 V15.6 H7.6 V10.4 H2.4 Z" fill="#f40808" stroke="#a01010" stroke-width=".5"/></svg></div>
<div class="abs" style="left:181.6px;top:23.4px;width:58.8px;height:23.5px;background:linear-gradient(#efefef,#f8f8f8 60%,#f4f4f4)"><svg class="abs" style="left:21.4px;top:3.4px" width="16" height="16" viewBox="0 0 18 18"><rect x="2.4" y="7.6" width="13.2" height="2.8" fill="#f40808" stroke="#a01010" stroke-width=".5"/></svg></div>
<div class="abs" style="left:241.6px;top:23.4px;width:57.4px;height:23.5px;background:linear-gradient(#efefef,#f8f8f8 60%,#f4f4f4)"><svg class="abs" style="left:20.7px;top:3.4px" width="16" height="16" viewBox="0 0 18 18"><g transform="translate(2.6 15.6) rotate(45)"><path d="M0 0 L-1.5 -3.4 H1.5 Z" fill="#e8cc9c" stroke="#7a5a34" stroke-width=".35"/><path d="M0 0 L-.5 -1.1 H.5 Z" fill="#222"/><rect x="-1.5" y="-16.4" width="3" height="12.999999999999998" fill="#f0a630" stroke="#a8701c" stroke-width=".35"/><rect x="-1.5" y="-18.4" width="3" height="2.6" rx=".7" fill="#e03020" stroke="#a02014" stroke-width=".35"/></g></svg></div>
<div class="abs" style="left:7px;top:55.2px;width:16px;height:8.6px;background:#fff;border:1px solid #000"></div>
<span class="t" style="left:29px;top:52.6px;font-size:13.8px;color:#000">0</span>
<div class="abs" style="left:7px;top:75.2px;width:16px;height:8.6px;background:#f00;border:1px solid #000"></div>
<span class="t" style="left:29px;top:72.8px;font-size:13.8px;color:#000">Offset</span>
<svg class="abs" style="left:260px;top:51.5px" width="16" height="16" viewBox="0 0 18 18"><path d="M1 9.4 Q4 3.2 9.4 3.2 Q14.6 3.2 17.2 9 Q13.8 14.6 9 14.6 Q4.2 14.6 1 9.4 Z" fill="#000"/><path d="M3.4 9.6 Q5.6 6.2 9.2 6.2 Q12.8 6.2 14.8 9.4 Q12.6 12.6 9.2 12.6 Q5.6 12.6 3.4 9.6 Z" fill="#fff"/><circle cx="9.2" cy="9" r="3.1" fill="#000"/><circle cx="8.2" cy="7.8" r=".9" fill="#fff"/><path d="M1 9.4 Q4.6 1.6 10.4 2.6 Q15 3.4 17.2 9" fill="none" stroke="#000" stroke-width="1.6"/></svg>
<svg class="abs" style="left:284.5px;top:51.2px" width="11.5" height="15.4" viewBox="0 0 14 18" preserveAspectRatio="none"><path d="M3.6 8.6 V6 Q3.6 2 7 2 Q10.4 2 10.4 6 V8.6" fill="none" stroke="#b4b4b4" stroke-width="1.6"/><rect x="1.6" y="8.4" width="10.8" height="8" rx=".6" fill="#b4b4b4"/></svg>
<svg class="abs" style="left:260px;top:71.5px" width="16" height="16" viewBox="0 0 18 18"><path d="M1 9.4 Q4 3.2 9.4 3.2 Q14.6 3.2 17.2 9 Q13.8 14.6 9 14.6 Q4.2 14.6 1 9.4 Z" fill="#000"/><path d="M3.4 9.6 Q5.6 6.2 9.2 6.2 Q12.8 6.2 14.8 9.4 Q12.6 12.6 9.2 12.6 Q5.6 12.6 3.4 9.6 Z" fill="#fff"/><circle cx="9.2" cy="9" r="3.1" fill="#000"/><circle cx="8.2" cy="7.8" r=".9" fill="#fff"/><path d="M1 9.4 Q4.6 1.6 10.4 2.6 Q15 3.4 17.2 9" fill="none" stroke="#000" stroke-width="1.6"/></svg>
<svg class="abs" style="left:284.5px;top:71.2px" width="11.5" height="15.4" viewBox="0 0 14 18" preserveAspectRatio="none"><path d="M3.6 8.6 V6 Q3.6 2 7 2 Q10.4 2 10.4 6 V8.6" fill="none" stroke="#b4b4b4" stroke-width="1.6"/><rect x="1.6" y="8.4" width="10.8" height="8" rx=".6" fill="#b4b4b4"/></svg>
<svg class="abs" style="left:238px;top:70px" width="18" height="18" viewBox="0 0 18 18"><g transform="translate(2.6 15.6) rotate(45)"><path d="M0 0 L-1.5 -3.4 H1.5 Z" fill="#e8cc9c" stroke="#7a5a34" stroke-width=".35"/><path d="M0 0 L-.5 -1.1 H.5 Z" fill="#222"/><rect x="-1.5" y="-16.4" width="3" height="12.999999999999998" fill="#f0a630" stroke="#a8701c" stroke-width=".35"/><rect x="-1.5" y="-18.4" width="3" height="2.6" rx=".7" fill="#e03020" stroke="#a02014" stroke-width=".35"/></g></svg>
<div class="abs" style="left:299px;top:23px;width:1px;height:667px;background:#c9c9c9"></div>
</div>
<div id="rtb" class="abs">
<i class="abs" style="left:7.5px;top:8px;width:2px;height:2px;background:#a5a5a5"></i>
<i class="abs" style="left:13.5px;top:8px;width:2px;height:2px;background:#a5a5a5"></i>
<i class="abs" style="left:19.5px;top:8px;width:2px;height:2px;background:#a5a5a5"></i>
<i class="abs" style="left:25.5px;top:8px;width:2px;height:2px;background:#a5a5a5"></i>
<i class="abs" style="left:31.5px;top:8px;width:2px;height:2px;background:#a5a5a5"></i>
<div class="hl" style="left:1px;top:12px;width:46px;height:43px;border-radius:5px 0 0 5px"></div>
<div class="hl" style="left:1px;top:309px;width:46px;height:43px;border-radius:5px 0 0 5px"></div>
<i class="abs" style="left:3.5px;top:153px;width:1px;height:1px;background:#444"></i>
<i class="abs" style="left:6.7px;top:153px;width:1px;height:1px;background:#444"></i>
<i class="abs" style="left:9.9px;top:153px;width:1px;height:1px;background:#444"></i>
<i class="abs" style="left:13.1px;top:153px;width:1px;height:1px;background:#444"></i>
<i class="abs" style="left:16.3px;top:153px;width:1px;height:1px;background:#444"></i>
<i class="abs" style="left:19.5px;top:153px;width:1px;height:1px;background:#444"></i>
<i class="abs" style="left:22.7px;top:153px;width:1px;height:1px;background:#444"></i>
<i class="abs" style="left:25.9px;top:153px;width:1px;height:1px;background:#444"></i>
<i class="abs" style="left:29.1px;top:153px;width:1px;height:1px;background:#444"></i>
<i class="abs" style="left:32.3px;top:153px;width:1px;height:1px;background:#444"></i>
<i class="abs" style="left:35.5px;top:153px;width:1px;height:1px;background:#444"></i>
<i class="abs" style="left:38.7px;top:153px;width:1px;height:1px;background:#444"></i>
<i class="abs" style="left:41.9px;top:153px;width:1px;height:1px;background:#444"></i>
<i class="abs" style="left:3.5px;top:301px;width:1px;height:1px;background:#444"></i>
<i class="abs" style="left:6.7px;top:301px;width:1px;height:1px;background:#444"></i>
<i class="abs" style="left:9.9px;top:301px;width:1px;height:1px;background:#444"></i>
<i class="abs" style="left:13.1px;top:301px;width:1px;height:1px;background:#444"></i>
<i class="abs" style="left:16.3px;top:301px;width:1px;height:1px;background:#444"></i>
<i class="abs" style="left:19.5px;top:301px;width:1px;height:1px;background:#444"></i>
<i class="abs" style="left:22.7px;top:301px;width:1px;height:1px;background:#444"></i>
<i class="abs" style="left:25.9px;top:301px;width:1px;height:1px;background:#444"></i>
<i class="abs" style="left:29.1px;top:301px;width:1px;height:1px;background:#444"></i>
<i class="abs" style="left:32.3px;top:301px;width:1px;height:1px;background:#444"></i>
<i class="abs" style="left:35.5px;top:301px;width:1px;height:1px;background:#444"></i>
<i class="abs" style="left:38.7px;top:301px;width:1px;height:1px;background:#444"></i>
<i class="abs" style="left:41.9px;top:301px;width:1px;height:1px;background:#444"></i>
<svg class="abs" style="left:8px;top:19px" width="28" height="28" viewBox="0 0 28 28"><rect x=".5" y=".5" width="27" height="27" fill="#fff" stroke="#2a2a2a" stroke-width=".8"/><rect x=".2" y=".2" width="27.6" height="4.2" fill="#000"/><rect x="1.6" y="1.4" width="2.6" height="2.6" fill="#fff"/><path d="M8 11.6 L17 8.4 V19.4 L8 22.6 Z" fill="#ddd" stroke="#666" stroke-width=".7"/><path d="M10 12.2 L19 9 V20 L10 23.2 Z" fill="#e4e4e4" stroke="#666" stroke-width=".7"/><path d="M12 12.8 L21 9.6 V20.6 L12 23.8 Z" fill="#f0f0f0" stroke="#555" stroke-width=".7"/><path d="M15.4 20.6 L18.6 14.6 L18.8 19.4 M16.4 19 L18.8 18.2" fill="none" stroke="#f04040" stroke-width=".7"/></svg>
<svg class="abs" style="left:8px;top:66px" width="28" height="28" viewBox="0 0 28 28"><rect x=".5" y=".5" width="27" height="27" fill="#fff" stroke="#2a2a2a" stroke-width=".8"/><rect x=".2" y=".2" width="27.6" height="4.2" fill="#000"/><rect x="1.6" y="1.4" width="2.6" height="2.6" fill="#fff"/><rect x="6.6" y="10" width="10.6" height="8.6" fill="#f4ecc4" stroke="#8c8468" stroke-width=".8"/><circle cx="18" cy="18" r="5" fill="#f4ecc4" fill-opacity=".6" stroke="#8c8468" stroke-width=".8"/></svg>
<svg class="abs" style="left:8px;top:112px" width="28" height="28" viewBox="0 0 28 28"><rect x=".5" y=".5" width="27" height="27" fill="#fff" stroke="#2a2a2a" stroke-width=".8"/><rect x=".2" y=".2" width="27.6" height="4.2" fill="#000"/><rect x="1.6" y="1.4" width="2.6" height="2.6" fill="#fff"/><rect x="5.4" y="10" width="16.8" height="11.6" rx="2.4" fill="#f4f4f0" stroke="#b4c4e4" stroke-width="1"/></svg>
<svg class="abs" style="left:8px;top:168px" width="28" height="28" viewBox="0 0 28 28"><rect x=".5" y=".5" width="27" height="27" fill="#fff" stroke="#2a2a2a" stroke-width=".8"/><rect x=".2" y=".2" width="27.6" height="4.2" fill="#000"/><rect x="1.6" y="1.4" width="2.6" height="2.6" fill="#fff"/><rect x="3.6" y="8.4" width="4" height="3.2" fill="#000"/><rect x="10.4" y="8.4" width="13.6" height="3.2" fill="#fff" stroke="#222" stroke-width=".7"/><rect x="3.6" y="14.4" width="4" height="3.2" fill="#000"/><rect x="10.4" y="14.4" width="13.6" height="3.2" fill="#fff" stroke="#222" stroke-width=".7"/><rect x="3.6" y="20.4" width="4" height="3.2" fill="#000"/><rect x="10.4" y="20.4" width="13.6" height="3.2" fill="#fff" stroke="#222" stroke-width=".7"/></svg>
<svg class="abs" style="left:8px;top:214px" width="28" height="28" viewBox="0 0 28 28"><rect x=".5" y=".5" width="27" height="27" fill="#fff" stroke="#2a2a2a" stroke-width=".8"/><rect x=".2" y=".2" width="27.6" height="4.2" fill="#000"/><rect x="1.6" y="1.4" width="2.6" height="2.6" fill="#fff"/><defs><linearGradient id="g21" x1="0" y1="0" x2="1" y2="0"><stop offset="0" stop-color="#777"/><stop offset=".5" stop-color="#bbb"/><stop offset="1" stop-color="#666"/></linearGradient></defs><path d="M6.6 9.6 Q14 7.6 21.4 9.6 Q20.4 13.4 15.8 15.4 V22.8 L12.8 20.4 V15.4 Q7.6 13.4 6.6 9.6 Z" fill="url(#g21)" stroke="#555" stroke-width=".5"/><ellipse cx="14" cy="9.6" rx="7.4" ry="1.5" fill="#999" stroke="#666" stroke-width=".4"/></svg>
<svg class="abs" style="left:8px;top:260px" width="28" height="28" viewBox="0 0 28 28"><rect x=".5" y=".5" width="27" height="27" fill="#fff" stroke="#2a2a2a" stroke-width=".8"/><rect x=".2" y=".2" width="27.6" height="4.2" fill="#000"/><rect x="1.6" y="1.4" width="2.6" height="2.6" fill="#fff"/><defs><linearGradient id="g22" x1="0" y1="0" x2="0" y2="1"><stop offset="0" stop-color="#ccc"/><stop offset=".5" stop-color="#888"/><stop offset="1" stop-color="#bbb"/></linearGradient></defs><path d="M6.4 9.6 L11 12.4 V19.6 L6.4 22.4 Z" fill="#f0f0f0" stroke="#333" stroke-width=".8"/><rect x="11" y="12.4" width="11" height="7.2" rx="1" fill="url(#g22)" stroke="#555" stroke-width=".5"/><path d="M14 12.4 V19.6 M16 12.4 V19.6 M18 12.4 V19.6 M20 12.4 V19.6" stroke="#666" stroke-width=".5"/><path d="M3.6 16 H24.6" stroke="#f48888" stroke-width=".8" stroke-dasharray="3 1 1 1"/></svg>
<svg class="abs" style="left:8px;top:316px" width="28" height="28" viewBox="0 0 28 28"><rect x=".5" y=".5" width="27" height="27" fill="#fff" stroke="#2a2a2a" stroke-width=".8"/><rect x=".2" y=".2" width="27.6" height="4.2" fill="#000"/><rect x="1.6" y="1.4" width="2.6" height="2.6" fill="#fff"/><text x="2.6" y="9.4" font-size="2.8" font-family="Liberation Sans,sans-serif" fill="#666">Command: info</text><text x="2.6" y="12.8" font-size="2.8" font-family="Liberation Sans,sans-serif" fill="#666">Command: line</text><text x="2.6" y="16.2" font-size="2.8" font-family="Liberation Sans,sans-serif" fill="#666">Coordinate: 10,10</text><text x="2.6" y="19.6" font-size="2.8" font-family="Liberation Sans,sans-serif" fill="#666">Coordinate: @20,50</text><path d="M.5 22.6 H27.5" stroke="#111" stroke-width=".8"/><text x="2.4" y="26.4" font-size="3.4" font-family="Liberation Sans,sans-serif" fill="#222">C:</text><text x="10" y="26.4" font-size="3.4" font-family="Liberation Sans,sans-serif" fill="#222" textLength="15.5">Command</text></svg>
<svg class="abs" style="left:8px;top:363px" width="28" height="28" viewBox="0 0 28 28"><rect x=".5" y=".5" width="27" height="27" fill="#fff" stroke="#2a2a2a" stroke-width=".8"/><rect x=".2" y=".2" width="27.6" height="4.2" fill="#000"/><rect x="1.6" y="1.4" width="2.6" height="2.6" fill="#fff"/><rect x="8" y="9" width="12.4" height="14.6" rx=".8" fill="#b97a22" stroke="#8a5a14" stroke-width=".5"/><rect x="9.6" y="10.8" width="9.2" height="11.4" fill="#f4f4f4"/><path d="M11 13.6 H17.4 M11 15.6 H17.4 M11 17.6 H17.4 M11 19.6 H15" stroke="#c8c8c8" stroke-width=".7"/><path d="M18.8 19.6 L16.2 22.2 H18.8 Z" fill="#999"/><rect x="11.4" y="7.8" width="5.6" height="2.6" rx=".6" fill="#8f8f84" stroke="#6e6e64" stroke-width=".4"/></svg>
</div>
</div></body></html>
